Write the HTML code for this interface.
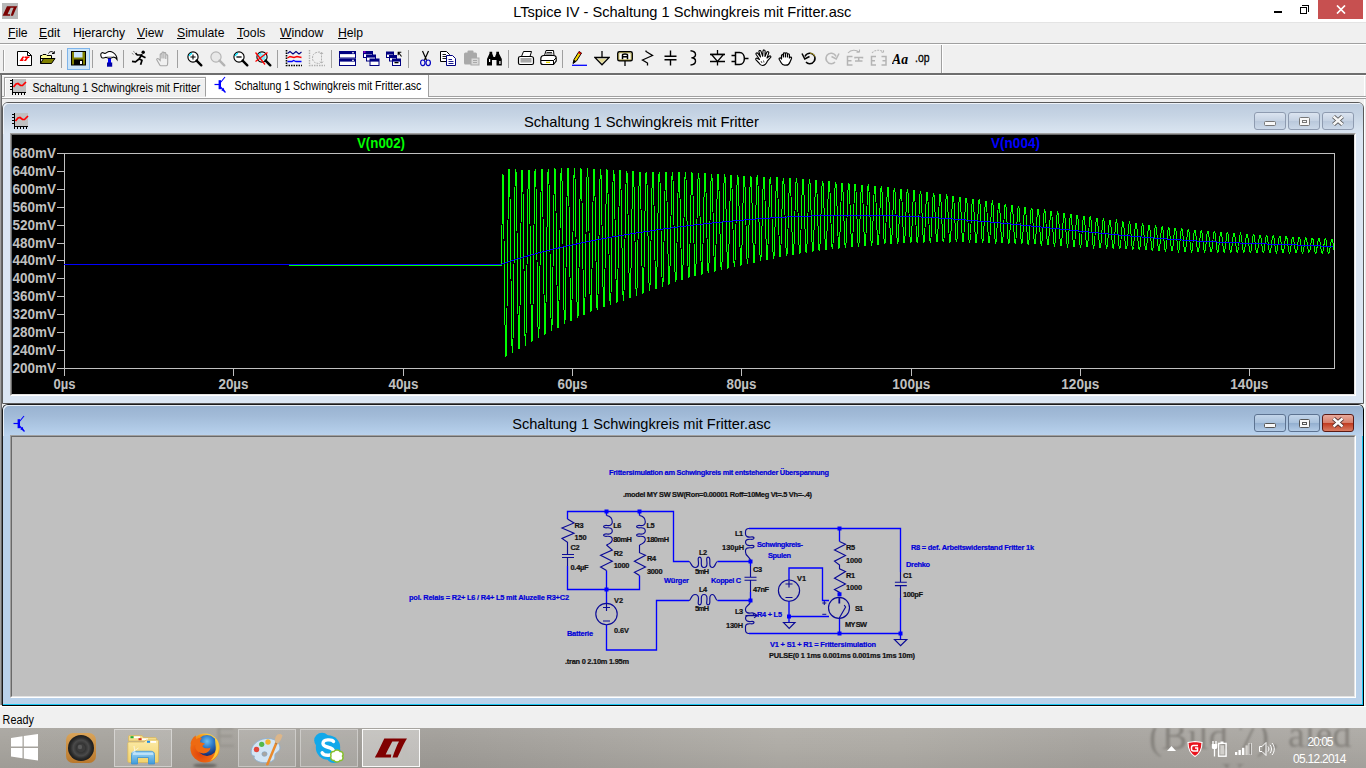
<!DOCTYPE html>
<html>
<head>
<meta charset="utf-8">
<title>LTspice IV - Schaltung 1 Schwingkreis mit Fritter.asc</title>
<style>
*{box-sizing:border-box;margin:0;padding:0}
html,body{width:1366px;height:768px;overflow:hidden;background:#f0f0f0;font-family:"Liberation Sans",sans-serif;}
.abs{position:absolute}
#titlebar{position:absolute;left:0;top:0;width:1366px;height:22px;background:#fff;}
#titletext{position:absolute;left:0;top:3px;width:1366px;text-align:center;font-size:15px;color:#000;letter-spacing:-0.1px}
#menubar{position:absolute;left:0;top:22px;width:1366px;height:22px;background:#f0f0f0;border-top:1px solid #e4e4e4;border-bottom:1px solid #a0a0a0;font-size:12.2px;color:#000}
#menubar span{position:absolute;top:2.6px}
#menubar u{text-decoration:underline}
#toolbar{position:absolute;left:0;top:44px;width:1366px;height:31px;background:#f0f0f0;border-top:1px solid #fff;border-bottom:2px solid #6e6e6e}
#tabbar{position:absolute;left:2px;top:75px;width:1364px;height:27px;}
#mdi{position:absolute;left:0;top:75px;width:1366px;height:630px;background:#f0f0f0;border-left:1px solid #a0a0a0;border-right:1px solid #e8e8e8;box-shadow:inset 1px 0 0 #696969,inset -1px 0 0 #fff}
.tsep{position:absolute;top:5px;width:1px;height:18px;background:#a0a0a0}
.ico{position:absolute;top:5px;width:20px;height:20px}
#status{position:absolute;left:0;top:706px;width:1366px;height:22px;background:#f0f0f0;border-top:1px solid #fff;font-size:12.5px;color:#000}
#taskbar{position:absolute;left:0;top:728px;width:1366px;height:40px;background:#a5a29c;overflow:hidden}
.win{position:absolute;border:1px solid #4a4a4a;border-radius:6px 6px 0 0}
.wtitle{position:absolute;left:0;width:100%;text-align:center;font-size:15px;color:#000}
.cbtn{position:absolute;height:18px;border:1px solid #8e9bb0;border-radius:3px}
.pl{position:absolute;font-family:"Liberation Sans",sans-serif;font-weight:bold;color:#c0c0c0;font-size:13.5px;line-height:14px;white-space:nowrap;transform-origin:0 0;transform:scaleX(0.93)}
.st{position:absolute;font-weight:bold;font-size:7.5px;line-height:8px;white-space:nowrap;color:#1a1a1a;transform-origin:0 50%}
.sb{color:#1c1cd0}
</style>
</head>
<body>
<!-- ============ main title bar ============ -->
<div id="titlebar">
  <svg class="abs" style="left:2px;top:3px" width="16" height="16" viewBox="0 0 16 16"><rect width="16" height="16" fill="#b8b8b8"/><g transform="translate(0.2,2.6) scale(0.46,0.5)"><path d="M10.3,1.4 H33 C30,6 27.5,12 23.5,20.5 L18.5,20.5 C20.5,14 23,8 25,4.4 H18.3 C16,9 13,14 11.7,17.5 L17.2,17.5 L16.9,20.5 L0.8,20.5 C4.5,14 7.5,7 10.3,1.4 Z" fill="#7a0000"/></g></svg>
  <svg class="abs" style="left:500px;top:0" width="400" height="22"><text x="13.2" y="16.7" font-family="Liberation Sans, sans-serif" font-size="15px" fill="#000" textLength="338.2" lengthAdjust="spacingAndGlyphs">LTspice IV - Schaltung 1 Schwingkreis mit Fritter.asc</text></svg>
  <div class="abs" style="left:1274px;top:11px;width:8px;height:2px;background:#000"></div>
  <div class="abs" style="left:1300px;top:7px;width:7px;height:7px;border:1px solid #000;background:#fff"></div>
  <div class="abs" style="left:1302px;top:5px;width:7px;height:7px;border:1px solid #000;border-left:none;border-bottom:none"></div>
  <div class="abs" style="left:1318px;top:0;width:45px;height:19px;background:#c75050"></div>
  <svg class="abs" style="left:1336px;top:5px" width="10" height="9" viewBox="0 0 10 9"><path d="M1 0.5 L9 8.5 M9 0.5 L1 8.5" stroke="#fff" stroke-width="1.7"/></svg>
</div>
<!-- ============ menu bar ============ -->
<div id="menubar">
  <span style="left:8px"><u>F</u>ile</span>
  <span style="left:39px"><u>E</u>dit</span>
  <span style="left:73px">H<u>i</u>erarchy</span>
  <span style="left:137px"><u>V</u>iew</span>
  <span style="left:177px"><u>S</u>imulate</span>
  <span style="left:237px"><u>T</u>ools</span>
  <span style="left:280px"><u>W</u>indow</span>
  <span style="left:338px"><u>H</u>elp</span>
</div>
<!-- ============ toolbar ============ -->
<div id="toolbar">
<div class="abs" style="left:3px;top:5px;width:2px;height:21px;border-left:1px solid #a0a0a0;border-right:1px solid #fff"></div>
<div class="abs" style="left:67px;top:3px;width:23px;height:22px;background:#cce4f7;border:1px solid #7eb4ea"></div>
<div class="tsep" style="left:61px"></div>
<div class="tsep" style="left:92px"></div>
<div class="tsep" style="left:123px"></div>
<div class="tsep" style="left:176.5px"></div>
<div class="tsep" style="left:277px"></div>
<div class="tsep" style="left:331px"></div>
<div class="tsep" style="left:408px"></div>
<div class="tsep" style="left:508px"></div>
<div class="tsep" style="left:561.5px"></div>
<div class="abs" style="left:941px;top:0;width:2px;height:28px;border-left:1px solid #a0a0a0;border-right:1px solid #fff"></div>
<svg class="abs" style="left:17px;top:6px" width="15" height="15" viewBox="0 0 15 15"><path d="M0.5 0.5H10.5L14.5 4.5V14.5H0.5Z" fill="#fff" stroke="#000"/><path d="M10.5 0.5V4.5H14.5" fill="none" stroke="#000"/><path d="M2.5 10 L5.5 5.5 H7.5 L5.5 8.5 H7 L6 10Z M8 5.5 H13 L12 7 H11 L9 10 H6.8 L9 7 H7.2Z" fill="#f00"/></svg>
<svg class="abs" style="left:40px;top:5px" width="16" height="15" viewBox="0 0 16 15"><path d="M8.5 3.5 C9.5 1.2 12.5 0.8 14 3.2 M14.3 3.5 H12 M14.3 3.5 V1.2" stroke="#000" fill="none"/><path d="M0.5 13.5V5.5H2L3 4.5H6L7 5.5H11.5V8.5H0.5" stroke="#000" fill="#ffff9a"/><path d="M0.5 13.5 L3.5 8.5 H15 L11.5 13.5Z" fill="#808000" stroke="#000"/></svg>
<svg class="abs" style="left:71px;top:6px" width="15" height="15" viewBox="0 0 15 15"><rect x="0.5" y="0.5" width="14" height="13.5" fill="#808000" stroke="#000"/><rect x="3" y="1" width="8.5" height="5.5" fill="#c9e6ff"/><rect x="3" y="8.5" width="9" height="5.5" fill="#000"/><rect x="9" y="10" width="2" height="3" fill="#fff"/></svg>
<svg class="abs" style="left:100px;top:5.5px" width="18" height="16" viewBox="0 0 18 16"><rect x="8" y="6.5" width="3" height="5.5" fill="#0000ff"/><rect x="7" y="11.5" width="5.2" height="4.2" fill="#0000a8"/><path d="M1,2.6 C1.4,1.6 2.6,1.4 3.6,2 C4.6,2.6 5.6,2.4 6.6,1.6 C8.2,0.4 11.2,0.3 13.2,1.6 C15.6,3.2 17,5.6 17,8.4 C16,6.6 14.6,6 13,6.2 L11.2,7 H7.8 L6,6.3 C4.6,7 3,7.2 2,6.8 C0.8,6 0.6,3.6 1,2.6 Z" fill="#fff" stroke="#000" stroke-width="1.1"/><path d="M6.5,5.6 H12.8" stroke="#b8b8b8" stroke-width="0.9"/></svg>
<svg class="abs" style="left:131px;top:5px" width="17" height="16" viewBox="0 0 17 16"><circle cx="12.2" cy="2.2" r="1.7" fill="#000"/><path d="M11.2 4.2 L8 9 M10.8 5 L6.3 5 L4.5 3.2 M10.5 5.8 L14.5 7.8 M8 9 L11 10.3 L9.6 14.8 M8 9 L4.5 11.8 L1 11.3" stroke="#000" stroke-width="1.7" fill="none" stroke-linejoin="round"/><path d="M2.2 1.2L4 2.6 M0.8 3.2 L2.6 4.4" stroke="#777" stroke-width="0.8"/></svg>
<svg class="abs" style="left:156px;top:5.5px" width="14" height="16" viewBox="0 0 14 16"><path d="M4.2 9.5 V3.6 C4.2 2.4 6 2.4 6 3.6 V7.5 V1.9 C6 0.7 7.9 0.7 7.9 1.9 V7.5 V2.5 C7.9 1.3 9.8 1.3 9.8 2.5 V8 V4.6 C9.8 3.4 11.7 3.4 11.7 4.6 V11.5 C11.7 13.5 11 14.8 10.2 14.8 H4.6 C4 14.8 3.6 14 3.2 13 L0.9 9 C0.3 7.9 1.8 7 2.6 8Z" fill="none" stroke="#a6a6a6" stroke-width="1.1"/></svg>
<svg class="abs" style="left:187px;top:6px" width="16" height="16" viewBox="0 0 16 16"><circle cx="6" cy="6" r="5.1" fill="#fff" stroke="#000" stroke-width="1.15"/><path d="M2.3 5 A3.8 3.8 0 0 1 5 2.3" stroke="#00e5ff" stroke-width="1.3" fill="none"/><path d="M3.4 6H8.6 M6 3.4V8.6" stroke="#000" stroke-width="1.1"/><path d="M9.6 9.6 L14.3 14.3" stroke="#000" stroke-width="2.4" stroke-linecap="round"/></svg>
<svg class="abs" style="left:210px;top:6px" width="16" height="16" viewBox="0 0 16 16"><circle cx="6" cy="6" r="5.1" fill="#e8e8e8" stroke="#b4b4b4" stroke-width="1.15"/><path d="M9.6 9.6 L14.3 14.3" stroke="#b4b4b4" stroke-width="2.4" stroke-linecap="round"/></svg>
<svg class="abs" style="left:233px;top:6px" width="16" height="16" viewBox="0 0 16 16"><circle cx="6" cy="6" r="5.1" fill="#fff" stroke="#000" stroke-width="1.15"/><path d="M2.3 5 A3.8 3.8 0 0 1 5 2.3" stroke="#00e5ff" stroke-width="1.3" fill="none"/><path d="M3.4 6H8.6" stroke="#000" stroke-width="1.3"/><path d="M9.6 9.6 L14.3 14.3" stroke="#000" stroke-width="2.4" stroke-linecap="round"/></svg>
<svg class="abs" style="left:255px;top:6px" width="17" height="16" viewBox="0 0 17 16"><g transform="translate(1,0)"><circle cx="6" cy="6" r="5.1" fill="#fff" stroke="#000" stroke-width="1.15"/><path d="M2.3 5 A3.8 3.8 0 0 1 5 2.3" stroke="#00e5ff" stroke-width="1.3" fill="none"/><circle cx="6" cy="6" r="3.6" fill="#7fe9f5"/><path d="M9.6 9.6 L14.3 14.3" stroke="#000" stroke-width="2.4" stroke-linecap="round"/></g><path d="M0.5 1.5 L10 13.5 M12.5 1.5 L0.5 10.5" stroke="#f00" stroke-width="1.3"/></svg>
<svg class="abs" style="left:285px;top:5px" width="18" height="17" viewBox="0 0 18 17"><path d="M1.5 0V15.5H17" stroke="#000" stroke-dasharray="1.5 1" fill="none" stroke-width="1.6"/><path d="M2.5 3.5 L5 1.5 L8 4 L11 1.5 L14 4 L16.5 2" stroke="#000080" fill="none" stroke-width="1.1"/><path d="M2.5 8 L5 6.5 L9 7.5 L12 6.5 L16.5 7.5" stroke="#f00" fill="none" stroke-width="1.4"/><path d="M2.5 11.5 H7 L8.5 10.5 L11 11.5 H16.5" stroke="#00f" fill="none" stroke-width="1.3"/></svg>
<svg class="abs" style="left:308px;top:5px" width="18" height="17" viewBox="0 0 18 17"><path d="M1.5 0V15.5H17" stroke="#b0b0b0" stroke-dasharray="1.5 1" fill="none" stroke-width="1.4"/><path d="M12 2 C6 2 4.5 5 4.5 8 C4.5 11 6 13.5 12 13.5 M13.5 2.5V13 M12 4 L13.5 2 L15 4 M12 11.5 L13.5 13.5 L15 11.5" stroke="#b0b0b0" fill="none" stroke-dasharray="2 1"/></svg>
<svg class="abs" style="left:339px;top:6px" width="18" height="15" viewBox="0 0 18 15"><rect x="0.5" y="0.5" width="16" height="6.5" fill="#fff" stroke="#000080"/><rect x="0.5" y="0.5" width="16" height="2.6" fill="#000080"/><rect x="0.5" y="8" width="16" height="6.5" fill="#fff" stroke="#000080"/><rect x="0.5" y="8" width="16" height="2.6" fill="#000080"/><rect x="13" y="1.3" width="2" height="1" fill="#fff"/><rect x="13" y="8.8" width="2" height="1" fill="#fff"/></svg>
<svg class="abs" style="left:363px;top:6px" width="17" height="15" viewBox="0 0 17 15"><rect x="0.5" y="0.5" width="9" height="6" fill="#fff" stroke="#000080"/><rect x="0.5" y="0.5" width="9" height="2.6" fill="#000080"/><rect x="0.5" y="0.5" width="2" height="1" fill="#f0f"/><rect x="3.5" y="4" width="9" height="6" fill="#fff" stroke="#000080"/><rect x="3.5" y="4" width="9" height="2.6" fill="#000080"/><rect x="7" y="8" width="9" height="6.5" fill="#fff" stroke="#000080"/><rect x="7" y="8" width="9" height="2.6" fill="#000080"/></svg>
<svg class="abs" style="left:386px;top:6px" width="17" height="15" viewBox="0 0 17 15"><rect x="0.5" y="1" width="7" height="5.5" fill="#fff" stroke="#000080"/><rect x="0.5" y="1" width="7" height="2.6" fill="#000080"/><rect x="3.5" y="4.5" width="7" height="5.5" fill="#fff" stroke="#000080"/><rect x="3.5" y="4.5" width="7" height="2.6" fill="#000080"/><rect x="6.5" y="8" width="8" height="6.5" fill="#fff" stroke="#000080"/><rect x="6.5" y="8" width="8" height="2.6" fill="#000080"/><rect x="8.5" y="11" width="4" height="1.3" fill="#000"/><path d="M15.5 5.5 L12.5 1.5 M12.2 4.3 V1.2 H15.3" stroke="#000" fill="none" stroke-width="1.1"/></svg>
<svg class="abs" style="left:419px;top:5px" width="13" height="17" viewBox="0 0 13 17"><path d="M3.5 1 L7.5 10 M9.5 1 L5.5 10" stroke="#000" stroke-width="1.2"/><ellipse cx="3.8" cy="12.8" rx="2.2" ry="2.8" fill="none" stroke="#0000c0" stroke-width="1.2"/><ellipse cx="9.2" cy="12.8" rx="2.2" ry="2.8" fill="none" stroke="#0000c0" stroke-width="1.2"/></svg>
<svg class="abs" style="left:440px;top:6px" width="17" height="15" viewBox="0 0 17 15"><path d="M0.5 0.5H6.5L9.5 3.5V10.5H0.5Z" fill="#fff" stroke="#000"/><path d="M2.5 3.5H6 M2.5 5.5H7.5 M2.5 7.5H7.5" stroke="#000" stroke-width="0.9"/><path d="M6.5 4.5H12.5L15.5 7.5V14.5H6.5Z" fill="#fff" stroke="#000080"/><path d="M8.5 8.5H12 M8.5 10.5H13.5 M8.5 12.5H13.5" stroke="#000080" stroke-width="0.9"/></svg>
<svg class="abs" style="left:463px;top:5px" width="17" height="16" viewBox="0 0 17 16"><rect x="1" y="2.5" width="13" height="12" rx="1.5" fill="#a9a9a9"/><rect x="4.5" y="0.5" width="6" height="3.5" rx="1" fill="#a9a9a9"/><rect x="8" y="8" width="8" height="7" fill="#d9d9d9" stroke="#a9a9a9"/><path d="M10 10.5H14 M10 12.5H14" stroke="#a9a9a9"/></svg>
<svg class="abs" style="left:486px;top:6px" width="17" height="15" viewBox="0 0 17 15"><path d="M1 14.5 V8 L3.5 2.5 V0.8 H6.2 V2.5 L7.5 6 H9 L10.3 2.5 V0.8 H13 V2.5 L15.8 8 V14.5 H10.5 V9 H6 V14.5Z" fill="#000"/><rect x="3" y="8" width="1.2" height="3" fill="#fff"/><rect x="13.3" y="10" width="1.2" height="3" fill="#fff"/></svg>
<svg class="abs" style="left:517px;top:6px" width="18" height="15" viewBox="0 0 18 15"><path d="M4.5 5.5 L6.5 0.5 H14.5 L13 5.5" fill="#fff" stroke="#000"/><path d="M1.5 7 C1.5 6 2.5 5.5 3.5 5.5 H14 C15.5 5.5 16.5 6.5 16.5 7.5 V12 C16.5 13 16 13.5 15 13.5 H3 C2 13.5 1.5 13 1.5 12Z" fill="#fff" stroke="#000" stroke-width="1.2"/><rect x="3.5" y="7" width="11" height="4.5" fill="#9a9a9a"/><path d="M3.5 8H14.5 M3.5 10H14.5" stroke="#eee" stroke-width="0.7" stroke-dasharray="1 1"/></svg>
<svg class="abs" style="left:540px;top:5px" width="17" height="16" viewBox="0 0 17 16"><path d="M4.5 5.5 L6 0.5 H13.5 L14 5.5" fill="#fff" stroke="#000"/><path d="M6.5 2.5H12 M6 4H12.5" stroke="#000" stroke-width="0.8"/><path d="M0.8 9 C0.8 7 2 5.5 4 5.5 H13.5 C15 5.5 16.2 6.5 16.2 8 V11 L13.5 14.5 H3 C1.5 14.5 0.8 13.5 0.8 12.5Z" fill="#fff" stroke="#000" stroke-width="1.2"/><path d="M1 10.5H13.5L16 8 M13.5 10.5V14" stroke="#000" fill="none"/><rect x="6" y="11.7" width="4" height="1.3" fill="#e6d800"/></svg>
<svg class="abs" style="left:571px;top:5px" width="17" height="16" viewBox="0 0 17 16"><path d="M1 15.3H16" stroke="#00f" stroke-width="1.3"/><path d="M2 13.5 L3 9.5 L8 1.5 L10.5 3 L5.5 11 Z" fill="#f2d400" stroke="#000" stroke-width="1"/><path d="M8 1.5 L10.5 3 L9.6 4.5 L7.1 3Z" fill="#e00000"/><path d="M2 13.5 L3 9.8 L5.3 11.2Z" fill="#000"/></svg>
<svg class="abs" style="left:594px;top:6px" width="16" height="15" viewBox="0 0 16 15"><path d="M8 0V6.5" stroke="#000" stroke-width="1.3"/><path d="M0.8 6.5H15.2L8 13.8Z" fill="none" stroke="#000" stroke-width="1.3"/><path d="M3.5 7.8H12.5L8 12.2Z" fill="#d8c84a" opacity="0.55"/></svg>
<svg class="abs" style="left:617px;top:6px" width="16" height="15" viewBox="0 0 16 15"><rect x="0.8" y="0.8" width="14.4" height="9" rx="1.5" fill="#fff" stroke="#000" stroke-width="1.5"/><rect x="1.8" y="1.8" width="12.4" height="7" rx="1" fill="none" stroke="#a09020" stroke-width="0.8"/><path d="M5.5 8.3V4C5.5 2.6 10.5 2.6 10.5 4V8.3 M5.5 5.8H10.5" stroke="#000" stroke-width="1.5" fill="none"/><path d="M8 10V15" stroke="#000" stroke-width="1.3"/></svg>
<svg class="abs" style="left:641px;top:5px" width="13" height="16" viewBox="0 0 13 16"><path d="M5 0.5 V1.5 L11.5 5.5 L1.5 10 L6.5 13 V15.5" fill="none" stroke="#000" stroke-width="1.3"/></svg>
<svg class="abs" style="left:664px;top:5px" width="13" height="16" viewBox="0 0 13 16"><path d="M6.5 0.5V6 M0.5 6.2H12.5 M0.5 9.8H12.5 M6.5 9.8V15.5" stroke="#000" stroke-width="1.4" fill="none"/></svg>
<svg class="abs" style="left:689px;top:5px" width="9" height="16" viewBox="0 0 9 16"><path d="M1.5 0.8 C8 1.5 8 7.2 2.5 7.8 C8 8.4 8 14.2 1.5 15" fill="none" stroke="#000" stroke-width="1.4"/></svg>
<svg class="abs" style="left:709px;top:5px" width="17" height="16" viewBox="0 0 17 16"><path d="M8.5 0V15.5 M1 4.5H16 M1 11.5H16" stroke="#000" stroke-width="1.3"/><path d="M2.5 4.5H14.5L8.5 11.5Z" fill="#f0f0f0" stroke="#000" stroke-width="1.3"/></svg>
<svg class="abs" style="left:731px;top:6px" width="18" height="15" viewBox="0 0 18 15"><path d="M0.5 4.5H4.5 M0.5 10.5H4.5 M13.5 7.5H17.5" stroke="#000" stroke-width="1.3"/><path d="M4.5 1.5H8.5C15 1.5 15 13.5 8.5 13.5H4.5Z" fill="#f4f4f4" stroke="#000" stroke-width="1.5"/></svg>
<svg class="abs" style="left:754px;top:4px" width="19" height="18" viewBox="0 0 19 18"><path d="M5.5 10.5 L2.2 5.5 C1.4 4.2 3 3.2 3.9 4.4 L6.5 8 L5 3 C4.5 1.5 6.5 0.9 7 2.4 L8.7 7.2 L9 2 C9.1 0.5 11.1 0.6 11.1 2.1 L11 7.5 L12.8 3.3 C13.4 1.9 15.2 2.7 14.7 4.1 L13 9 L15.2 7.2 C16.4 6.3 17.5 7.7 16.4 8.7 L13.5 11.8 C12.5 14.5 11 16.5 8.5 16.5 C6.5 16.5 5.8 15.5 5 14 L2 10.8 C1.2 9.8 2.5 8.6 3.4 9.5Z" fill="#fff" stroke="#000" stroke-width="1.1" stroke-linejoin="round"/><path d="M7 12 L8 14 M9.5 11.5 L10 13.5" stroke="#000" stroke-width="0.7"/></svg>
<svg class="abs" style="left:778px;top:6px" width="16" height="15" viewBox="0 0 16 15"><path d="M3.5 8 V4.6 C3.5 3.2 5.4 3.2 5.4 4.6 V6 V2.8 C5.4 1.4 7.4 1.4 7.4 2.8 V6 V2.8 C7.4 1.4 9.4 1.4 9.4 2.8 V6 V3.8 C9.4 2.4 11.4 2.4 11.4 3.8 V7 C12 5.5 14 6 13.5 7.5 L12 11 C11.5 12.5 10.5 14.2 8 14.2 H6.5 C4.5 14.2 3.8 13 3 11.5 L1.2 8.3 C0.6 7 2.5 6.3 3.1 7.5Z" fill="#fff" stroke="#000" stroke-width="1.2" stroke-linejoin="round"/></svg>
<svg class="abs" style="left:801px;top:5px" width="16" height="16" viewBox="0 0 16 16"><path d="M4 6.5 C5.5 2.5 11 2 13.2 5.5 C15.5 9.5 12.5 14 8.5 13.8 C7 13.7 5.8 13 5 12" fill="none" stroke="#000" stroke-width="1.5"/><path d="M9 3.2 C11 3 13 4.2 13.8 6.5" stroke="#b09a20" fill="none" stroke-width="1"/><path d="M1 3.5 L3.8 9 L8.5 6.5" fill="none" stroke="#000" stroke-width="1.5"/></svg>
<svg class="abs" style="left:824px;top:5px" width="16" height="16" viewBox="0 0 16 16"><path d="M12 6.5 C10.5 2.5 5 2 2.8 5.5 C0.5 9.5 3.5 14 7.5 13.8 C9 13.7 10.2 13 11 12" fill="none" stroke="#b8b8b8" stroke-width="1.5"/><path d="M15 3.5 L12.2 9 L7.5 6.5" fill="none" stroke="#b8b8b8" stroke-width="1.5"/></svg>
<svg class="abs" style="left:846px;top:4px" width="18" height="17" viewBox="0 0 18 17"><path d="M2 4 C5 0.5 10 0.5 13 3 M13.5 3.2 L10.5 3.2 M13.5 3.2 V0.5" stroke="#b4b4b4" fill="none" stroke-width="1.1"/><path d="M6.5 7.5H1.5V16H6.5 M1.5 11.7H5.5 M9 9.5V8.5H16.5V9.5 M12.7 8.5V12 M9 12H16.5" stroke="#b4b4b4" fill="none" stroke-width="1.5"/></svg>
<svg class="abs" style="left:870px;top:4px" width="18" height="17" viewBox="0 0 18 17"><path d="M2 4 C5 0.5 10 0.5 13 3 M13.5 3.2 L10.5 3.2 M13.5 3.2 V0.5" stroke="#b4b4b4" fill="none" stroke-width="1.1" stroke-dasharray="2 1"/><path d="M6 7.5H1.5V16H6 M1.5 11.7H5 M11.5 7.5H16V16H11.5 M16 11.7H12.5" stroke="#b4b4b4" fill="none" stroke-width="1.5"/></svg>
<svg class="abs" style="left:892px;top:5px" width="17" height="16" viewBox="0 0 17 16"><text x="0" y="14" font-family="Liberation Serif, serif" font-weight="bold" font-style="italic" font-size="15.5px" fill="#000" textLength="16" lengthAdjust="spacingAndGlyphs">Aa</text></svg>
<svg class="abs" style="left:915px;top:5px" width="16" height="17" viewBox="0 0 16 17"><text x="0" y="11.5" font-family="Liberation Sans, sans-serif" font-size="12.5px" fill="#000" stroke="#000" stroke-width="0.3" textLength="14.5" lengthAdjust="spacingAndGlyphs">.op</text></svg>
</div>
<div id="mdi"></div>
<!-- ============ tab bar ============ -->
<div id="tabbar">
<div class="abs" style="left:0px;top:0px;width:1364px;height:22px;border-top:1px solid #fff;border-bottom:1px solid #a0a0a0"></div>
<div class="abs" style="left:0px;top:22px;width:1364px;height:2px;border-top:1px solid #fff;border-bottom:1px solid #a0a0a0"></div>
<div class="abs" style="left:2px;top:2px;width:202px;height:20px;background:#f0f0f0;border:1px solid;border-color:#a0a0a0 #a0a0a0 #f0f0f0 #a0a0a0;box-shadow:inset 1px 1px 0 #fff"></div>
<svg class="abs" style="left:8px;top:4px" width="17" height="17" viewBox="0 0 17 17" shape-rendering="crispEdges"><rect x="3" y="0" width="13" height="13" fill="#c0c0c0"/><path d="M2.5 0V13.5H16" stroke="#000" fill="none"/><path d="M0 1.5H2M0 4.5H2M0 7.5H2M0 10.5H2M2.5 14V16M5.5 14V16M8.5 14V16M11.5 14V16M14.5 14V16" stroke="#000"/><path d="M3.5 8 L6 5 L8 4.5 L10.5 6.5 L12.5 6.5 L16 3" stroke="#f00" stroke-width="1.7" fill="none" shape-rendering="auto"/></svg>
<svg class="abs" style="left:30px;top:4px" width="172" height="18"><text x="0.4" y="12.8" font-family="Liberation Sans, sans-serif" font-size="12.5px" fill="#000" textLength="168" lengthAdjust="spacingAndGlyphs">Schaltung 1 Schwingkreis mit Fritter</text></svg>
<div class="abs" style="left:204px;top:0px;width:223px;height:22px;background:#fff;border-right:1px solid #a0a0a0"></div>
<svg class="abs" style="left:211.5px;top:1px" width="14" height="18" viewBox="0 0 14 18"><path d="M0.5 8.5H5.5" stroke="#0000ff" stroke-width="1.2" fill="none"/><rect x="4.6" y="4.2" width="2.4" height="9" fill="#0000ff"/><path d="M6.5 6.5 L11 1" stroke="#0000ff" stroke-width="1.1" fill="none"/><path d="M6.5 11 L11.5 16.5" stroke="#0000ff" stroke-width="1.3" fill="none"/><path d="M10.8 15.8 L7.2 14.2 L9.6 11.8Z" fill="#0000ff"/></svg>
<svg class="abs" style="left:232px;top:2px" width="192" height="18"><text x="0.4" y="12.8" font-family="Liberation Sans, sans-serif" font-size="12.5px" fill="#000" textLength="187" lengthAdjust="spacingAndGlyphs">Schaltung 1 Schwingkreis mit Fritter.asc</text></svg>

</div>
<!-- ============ MDI area ============ -->
<div class="win" style="left:2px;top:102px;width:1362px;height:302px;background:#dbe6f3;border-color:#5a5a5a">
  <div class="abs" style="left:0;top:0;width:1360px;height:31px;border-radius:5px 5px 0 0;background:linear-gradient(#bccbdd 0%,#c6d4e4 40%,#d3dfec 75%,#dbe6f2 100%);box-shadow:inset 1px 1px 0 #eef3f9"></div>
  <svg class="abs" style="left:9px;top:10px" width="17" height="17" viewBox="0 0 17 17" shape-rendering="crispEdges"><rect x="3" y="0" width="13" height="13" fill="#c0c0c0"/><path d="M2.5 0V13.5H16" stroke="#000" fill="none"/><path d="M0 1.5H2M0 4.5H2M0 7.5H2M0 10.5H2M2.5 14V16M5.5 14V16M8.5 14V16M11.5 14V16M14.5 14V16" stroke="#000"/><path d="M3.5 8 L6 5 L8 4.5 L10.5 6.5 L12.5 6.5 L16 3" stroke="#f00" stroke-width="1.7" fill="none" shape-rendering="auto"/></svg>
  <svg class="abs" style="left:497px;top:0" width="300" height="31"><text x="23.9" y="24.3" font-family="Liberation Sans, sans-serif" font-size="15px" fill="#000" textLength="235" lengthAdjust="spacingAndGlyphs">Schaltung 1 Schwingkreis mit Fritter</text></svg>
  <div class="cbtn" style="left:1251px;top:9px;width:32px;background:linear-gradient(#dbe4f0,#c4d1e2 50%,#b9c8db 51%,#cbd8e8)"><div class="abs" style="left:9px;top:8px;width:12px;height:5px;border:1px solid #777;background:#f8f8f8;border-radius:1.5px"></div></div>
  <div class="cbtn" style="left:1285px;top:9px;width:32px;background:linear-gradient(#dbe4f0,#c4d1e2 50%,#b9c8db 51%,#cbd8e8)"><div class="abs" style="left:10px;top:4px;width:11px;height:9px;border:1px solid #777;border-radius:1.5px;background:#f8f8f8"><div class="abs" style="left:2px;top:2px;width:5px;height:3px;border:1px solid #777;background:transparent"></div></div></div>
  <div class="cbtn" style="left:1319px;top:9px;width:32px;background:linear-gradient(#dbe4f0,#c4d1e2 50%,#b9c8db 51%,#cbd8e8)"><svg class="abs" style="left:9px;top:2px" width="12" height="11" viewBox="0 0 12 11"><path d="M1.5 1.5 L10.5 9.5 M10.5 1.5 L1.5 9.5" stroke="#555" stroke-width="4.2"/><path d="M1.5 1.5 L10.5 9.5 M10.5 1.5 L1.5 9.5" stroke="#f6f6f6" stroke-width="2.4"/></svg></div>
</div>
<div class="abs" style="left:10px;top:133px;width:1346px;height:263px;border:1px solid;border-color:#a0a0a0 #fff #fff #a0a0a0"><div style="width:100%;height:100%;background:#000;border:1px solid;border-color:#696969 #e3e3e3 #e3e3e3 #696969"></div></div>
<svg class="abs" style="left:12px;top:135px" width="1342" height="259" viewBox="12 135 1342 259">
  <g shape-rendering="crispEdges" stroke="#c0c0c0" stroke-width="1" fill="none">
    <path d="M57,153.5H1334.5V368.5H57 M64.5,153V376"/>
    <path d="M57,153.5H64 M57,171.5H64 M57,189.5H64 M57,207.5H64 M57,225.5H64 M57,243.5H64 M57,260.5H64 M57,278.5H64 M57,296.5H64 M57,314.5H64 M57,332.5H64 M57,350.5H64 M57,368.5H64 "/>
    <path d="M64.5,368V376 M233.5,368V376 M403.5,368V376 M572.5,368V376 M741.5,368V376 M911.5,368V376 M1080.5,368V376 M1249.5,368V376 "/>
  </g>
  <g shape-rendering="crispEdges" fill="none" stroke-width="1">
    <path d="M289,265.5 L501,265.5 L501.0,264.3 L501.5,253.0 L502.0,224.7 L502.5,192.7 L503.0,174.1 L503.5,199.5 L504.0,239.3 L504.5,284.4 L505.0,324.5 L505.5,350.6 L506.0,356.6 L506.5,341.4 L507.0,308.3 L507.5,264.8 L508.0,220.9 L508.5,186.4 L509.0,169.1 L509.5,172.9 L510.0,196.7 L510.5,235.0 L511.0,279.2 L511.5,319.1 L512.0,345.7 L512.5,352.9 L513.0,339.1 L513.5,307.6 L514.0,265.3 L514.5,222.1 L515.0,187.5 L515.5,169.4 L516.0,171.8 L516.5,194.0 L517.0,231.0 L517.5,274.2 L518.0,313.8 L518.5,340.9 L519.0,349.2 L519.5,336.9 L520.0,306.8 L520.5,265.9 L521.0,223.2 L521.5,188.6 L522.0,169.7 L522.5,170.9 L523.0,191.6 L523.5,227.2 L524.0,269.4 L524.5,308.7 L525.0,336.2 L525.5,345.5 L526.0,334.6 L526.5,306.1 L527.0,266.3 L527.5,224.4 L528.0,189.8 L528.5,170.2 L529.0,170.1 L529.5,189.4 L530.0,223.6 L530.5,264.8 L531.0,303.8 L531.5,331.6 L532.0,341.9 L532.5,332.4 L533.0,305.3 L533.5,266.8 L534.0,225.6 L534.5,191.0 L535.0,170.8 L535.5,169.5 L536.0,187.3 L536.5,220.1 L537.0,260.4 L537.5,299.0 L538.0,327.0 L538.5,338.3 L539.0,330.2 L539.5,304.5 L540.0,267.2 L540.5,226.7 L541.0,192.2 L541.5,171.4 L542.0,169.0 L542.5,185.4 L543.0,216.9 L543.5,256.1 L544.0,294.3 L544.5,322.6 L545.0,334.7 L545.5,327.9 L546.0,303.7 L546.5,267.6 L547.0,227.9 L547.5,193.5 L548.0,172.1 L548.5,168.6 L549.0,183.7 L549.5,213.8 L550.0,252.0 L550.5,289.7 L551.0,318.3 L551.5,331.2 L552.0,325.6 L552.5,302.8 L553.0,268.0 L553.5,229.0 L554.0,194.7 L554.5,172.9 L555.0,168.3 L555.5,182.1 L556.0,210.8 L556.5,248.1 L557.0,285.3 L557.5,314.0 L558.0,327.8 L558.5,323.4 L559.0,301.9 L559.5,268.3 L560.0,230.1 L560.5,196.0 L561.0,173.7 L561.5,168.2 L562.0,180.6 L562.5,208.1 L563.0,244.3 L563.5,281.0 L564.0,309.9 L564.5,324.3 L565.0,321.1 L565.5,301.0 L566.0,268.6 L566.5,231.2 L567.0,197.3 L567.5,174.6 L568.0,168.1 L568.5,179.3 L569.0,205.5 L569.5,240.7 L570.0,276.8 L570.5,305.8 L571.0,320.9 L571.5,318.8 L572.0,300.0 L572.5,268.8 L573.0,232.2 L573.5,198.6 L574.0,175.5 L574.5,168.2 L575.0,178.1 L575.5,203.0 L576.0,237.2 L576.5,272.8 L577.0,301.8 L577.5,317.6 L578.0,316.6 L578.5,299.0 L579.0,269.0 L579.5,233.3 L580.0,199.9 L580.5,176.5 L581.0,168.3 L581.5,177.0 L582.0,200.7 L582.5,233.8 L583.0,268.9 L583.5,297.9 L584.0,314.2 L584.5,314.3 L585.0,298.0 L585.5,269.1 L586.0,234.2 L586.5,201.2 L587.0,177.5 L587.5,168.5 L588.0,176.1 L588.5,198.5 L589.0,230.6 L589.5,265.0 L590.0,294.0 L590.5,310.9 L591.0,312.0 L591.5,296.9 L592.0,269.2 L592.5,235.2 L593.0,202.5 L593.5,178.6 L594.0,168.7 L594.5,175.2 L595.0,196.4 L595.5,227.5 L596.0,261.3 L596.5,290.3 L597.0,307.7 L597.5,309.7 L598.0,295.8 L598.5,269.3 L599.0,236.1 L599.5,203.8 L600.0,179.6 L600.5,169.1 L601.0,174.5 L601.5,194.5 L602.0,224.5 L602.5,257.8 L603.0,286.6 L603.5,304.5 L604.0,307.4 L604.5,294.7 L605.0,269.3 L605.5,236.9 L606.0,205.0 L606.5,180.7 L607.0,169.5 L607.5,173.8 L608.0,192.7 L608.5,221.7 L609.0,254.3 L609.5,283.0 L610.0,301.3 L610.5,305.1 L611.0,293.5 L611.5,269.2 L612.0,237.8 L612.5,206.2 L613.0,181.8 L613.5,169.9 L614.0,173.3 L614.5,191.0 L615.0,219.0 L615.5,250.9 L616.0,279.4 L616.5,298.1 L617.0,302.8 L617.5,292.3 L618.0,269.1 L618.5,238.5 L619.0,207.4 L619.5,182.9 L620.0,170.4 L620.5,172.8 L621.0,189.4 L621.5,216.4 L622.0,247.6 L622.5,276.0 L623.0,295.0 L623.5,300.5 L624.0,291.1 L624.5,269.0 L625.0,239.2 L625.5,208.6 L626.0,184.0 L626.5,171.0 L627.0,172.4 L627.5,187.9 L628.0,213.9 L628.5,244.5 L629.0,272.6 L629.5,292.0 L630.0,298.2 L630.5,289.8 L631.0,268.8 L631.5,239.9 L632.0,209.8 L632.5,185.2 L633.0,171.6 L633.5,172.1 L634.0,186.5 L634.5,211.6 L635.0,241.4 L635.5,269.3 L636.0,289.0 L636.5,295.9 L637.0,288.5 L637.5,268.5 L638.0,240.6 L638.5,210.9 L639.0,186.3 L639.5,172.2 L640.0,171.9 L640.5,185.3 L641.0,209.3 L641.5,238.5 L642.0,266.1 L642.5,286.0 L643.0,293.6 L643.5,287.2 L644.0,268.3 L644.5,241.2 L645.0,212.0 L645.5,187.4 L646.0,172.9 L646.5,171.7 L647.0,184.1 L647.5,207.2 L648.0,235.6 L648.5,263.0 L649.0,283.0 L649.5,291.3 L650.0,285.8 L650.5,267.9 L651.0,241.7 L651.5,213.1 L652.0,188.5 L652.5,173.6 L653.0,171.7 L653.5,183.0 L654.0,205.1 L654.5,232.8 L655.0,259.9 L655.5,280.1 L656.0,289.0 L656.5,284.4 L657.0,267.6 L657.5,242.2 L658.0,214.1 L658.5,189.7 L659.0,174.4 L659.5,171.6 L660.0,182.1 L660.5,203.2 L661.0,230.2 L661.5,256.9 L662.0,277.3 L662.5,286.7 L663.0,283.1 L663.5,267.2 L664.0,242.7 L664.5,215.1 L665.0,190.8 L665.5,175.2 L666.0,171.7 L666.5,181.2 L667.0,201.3 L667.5,227.6 L668.0,254.0 L668.5,274.5 L669.0,284.5 L669.5,281.6 L670.0,266.7 L670.5,243.1 L671.0,216.1 L671.5,191.9 L672.0,176.0 L672.5,171.8 L673.0,180.3 L673.5,199.6 L674.0,225.2 L674.5,251.2 L675.0,271.7 L675.5,282.2 L676.0,280.2 L676.5,266.2 L677.0,243.5 L677.5,217.1 L678.0,193.0 L678.5,176.8 L679.0,172.0 L679.5,179.6 L680.0,198.0 L680.5,222.8 L681.0,248.4 L681.5,269.0 L682.0,280.0 L682.5,278.8 L683.0,265.7 L683.5,243.8 L684.0,218.0 L684.5,194.1 L685.0,177.6 L685.5,172.2 L686.0,179.0 L686.5,196.4 L687.0,220.5 L687.5,245.7 L688.0,266.4 L688.5,277.8 L689.0,277.3 L689.5,265.2 L690.0,244.1 L690.5,218.9 L691.0,195.2 L691.5,178.5 L692.0,172.5 L692.5,178.4 L693.0,195.0 L693.5,218.3 L694.0,243.1 L694.5,263.8 L695.0,275.6 L695.5,275.9 L696.0,264.6 L696.5,244.3 L697.0,219.7 L697.5,196.3 L698.0,179.4 L698.5,172.8 L699.0,177.9 L699.5,193.6 L700.0,216.2 L700.5,240.6 L701.0,261.2 L701.5,273.4 L702.0,274.4 L702.5,264.0 L703.0,244.6 L703.5,220.5 L704.0,197.4 L704.5,180.3 L705.0,173.2 L705.5,177.5 L706.0,192.3 L706.5,214.2 L707.0,238.2 L707.5,258.7 L708.0,271.3 L708.5,272.9 L709.0,263.4 L709.5,244.7 L710.0,221.3 L710.5,198.4 L711.0,181.2 L711.5,173.6 L712.0,177.2 L712.5,191.1 L713.0,212.3 L713.5,235.8 L714.0,256.3 L714.5,269.2 L715.0,271.4 L715.5,262.7 L716.0,244.9 L716.5,222.1 L717.0,199.5 L717.5,182.2 L718.0,174.0 L718.5,176.9 L719.0,190.0 L719.5,210.5 L720.0,233.5 L720.5,253.9 L721.0,267.1 L721.5,270.0 L722.0,262.0 L722.5,245.0 L723.0,222.8 L723.5,200.5 L724.0,183.1 L724.5,174.5 L725.0,176.7 L725.5,189.0 L726.0,208.7 L726.5,231.3 L727.0,251.6 L727.5,265.0 L728.0,268.5 L728.5,261.3 L729.0,245.1 L729.5,223.5 L730.0,201.5 L730.5,184.1 L731.0,175.1 L731.5,176.5 L732.0,188.1 L732.5,207.1 L733.0,229.2 L733.5,249.3 L734.0,263.0 L734.5,267.0 L735.0,260.6 L735.5,245.2 L736.0,224.2 L736.5,202.5 L737.0,185.0 L737.5,175.7 L738.0,176.5 L738.5,187.3 L739.0,205.5 L739.5,227.1 L740.0,247.1 L740.5,261.0 L741.0,265.6 L741.5,259.9 L742.0,245.2 L742.5,224.9 L743.0,203.5 L743.5,186.0 L744.0,176.3 L744.5,176.5 L745.0,186.5 L745.5,204.1 L746.0,225.2 L746.5,245.0 L747.0,259.0 L747.5,264.1 L748.0,259.1 L748.5,245.2 L749.0,225.5 L749.5,204.5 L750.0,187.0 L750.5,176.9 L751.0,176.5 L751.5,185.8 L752.0,202.7 L752.5,223.3 L753.0,242.9 L753.5,257.1 L754.0,262.7 L754.5,258.4 L755.0,245.2 L755.5,226.1 L756.0,205.5 L756.5,188.0 L757.0,177.6 L757.5,176.6 L758.0,185.2 L758.5,201.4 L759.0,221.5 L759.5,240.9 L760.0,255.2 L760.5,261.3 L761.0,257.6 L761.5,245.1 L762.0,226.7 L762.5,206.5 L763.0,189.0 L763.5,178.3 L764.0,176.8 L764.5,184.7 L765.0,200.2 L765.5,219.7 L766.0,238.9 L766.5,253.4 L767.0,259.8 L767.5,256.8 L768.0,245.1 L768.5,227.3 L769.0,207.4 L769.5,190.1 L770.0,179.1 L770.5,177.0 L771.0,184.2 L771.5,199.0 L772.0,218.1 L772.5,237.1 L773.0,251.6 L773.5,258.5 L774.0,256.1 L774.5,245.0 L775.0,227.8 L775.5,208.4 L776.0,191.1 L776.5,179.9 L777.0,177.3 L777.5,183.8 L778.0,198.0 L778.5,216.5 L779.0,235.2 L779.5,249.9 L780.0,257.1 L780.5,255.3 L781.0,244.9 L781.5,228.3 L782.0,209.3 L782.5,192.1 L783.0,180.7 L783.5,177.6 L784.0,183.5 L784.5,197.0 L785.0,215.0 L785.5,233.5 L786.0,248.2 L786.5,255.7 L787.0,254.5 L787.5,244.8 L788.0,228.8 L788.5,210.2 L789.0,193.2 L789.5,181.6 L790.0,178.0 L790.5,183.3 L791.0,196.1 L791.5,213.6 L792.0,231.8 L792.5,246.5 L793.0,254.4 L793.5,253.8 L794.0,244.7 L794.5,229.3 L795.0,211.1 L795.5,194.2 L796.0,182.4 L796.5,178.4 L797.0,183.1 L797.5,195.3 L798.0,212.3 L798.5,230.2 L799.0,244.9 L799.5,253.1 L800.0,253.0 L800.5,244.6 L801.0,229.8 L801.5,212.0 L802.0,195.3 L802.5,183.3 L803.0,178.9 L803.5,183.0 L804.0,194.6 L804.5,211.0 L805.0,228.6 L805.5,243.3 L806.0,251.9 L806.5,252.2 L807.0,244.4 L807.5,230.3 L808.0,212.9 L808.5,196.3 L809.0,184.3 L809.5,179.4 L810.0,182.9 L810.5,193.9 L811.0,209.9 L811.5,227.1 L812.0,241.8 L812.5,250.6 L813.0,251.5 L813.5,244.3 L814.0,230.7 L814.5,213.8 L815.0,197.4 L815.5,185.2 L816.0,180.0 L816.5,183.0 L817.0,193.3 L817.5,208.8 L818.0,225.7 L818.5,240.4 L819.0,249.4 L819.5,250.8 L820.0,244.2 L820.5,231.1 L821.0,214.6 L821.5,198.4 L822.0,186.2 L822.5,180.7 L823.0,183.1 L823.5,192.8 L824.0,207.8 L824.5,224.4 L825.0,239.0 L825.5,248.2 L826.0,250.0 L826.5,244.0 L827.0,231.6 L827.5,215.5 L828.0,199.5 L828.5,187.2 L829.0,181.3 L829.5,183.2 L830.0,192.4 L830.5,206.8 L831.0,223.1 L831.5,237.6 L832.0,247.1 L832.5,249.3 L833.0,243.9 L833.5,232.0 L834.0,216.4 L834.5,200.6 L835.0,188.2 L835.5,182.0 L836.0,183.4 L836.5,192.1 L837.0,205.9 L837.5,221.9 L838.0,236.4 L838.5,246.0 L839.0,248.6 L839.5,243.7 L840.0,232.4 L840.5,217.2 L841.0,201.7 L841.5,189.3 L842.0,182.8 L842.5,183.7 L843.0,191.8 L843.5,205.2 L844.0,220.8 L844.5,235.1 L845.0,244.9 L845.5,248.0 L846.0,243.6 L846.5,232.8 L847.0,218.1 L847.5,202.8 L848.0,190.3 L848.5,183.6 L849.0,184.0 L849.5,191.6 L850.0,204.4 L850.5,219.7 L851.0,233.9 L851.5,243.9 L852.0,247.3 L852.5,243.4 L853.0,233.2 L853.5,218.9 L854.0,203.9 L854.5,191.4 L855.0,184.4 L855.5,184.4 L856.0,191.4 L856.5,203.8 L857.0,218.7 L857.5,232.8 L858.0,242.9 L858.5,246.7 L859.0,243.3 L859.5,233.6 L860.0,219.8 L860.5,205.0 L861.0,192.5 L861.5,185.3 L862.0,184.9 L862.5,191.4 L863.0,203.2 L863.5,217.8 L864.0,231.8 L864.5,241.9 L865.0,246.0 L865.5,243.2 L866.0,234.0 L866.5,220.6 L867.0,206.0 L867.5,193.7 L868.0,186.2 L868.5,185.4 L869.0,191.4 L869.5,202.7 L870.0,217.0 L870.5,230.8 L871.0,241.0 L871.5,245.5 L872.0,243.0 L872.5,234.4 L873.0,221.4 L873.5,207.2 L874.0,194.8 L874.5,187.2 L875.0,185.9 L875.5,191.4 L876.0,202.3 L876.5,216.2 L877.0,229.8 L877.5,240.2 L878.0,244.9 L878.5,242.9 L879.0,234.8 L879.5,222.2 L880.0,208.3 L880.5,196.0 L881.0,188.1 L881.5,186.5 L882.0,191.5 L882.5,202.0 L883.0,215.5 L883.5,228.9 L884.0,239.3 L884.5,244.3 L885.0,242.8 L885.5,235.1 L886.0,223.1 L886.5,209.4 L887.0,197.1 L887.5,189.1 L888.0,187.2 L888.5,191.7 L889.0,201.7 L889.5,214.8 L890.0,228.1 L890.5,238.5 L891.0,243.8 L891.5,242.7 L892.0,235.5 L892.5,223.9 L893.0,210.5 L893.5,198.3 L894.0,190.2 L894.5,187.9 L895.0,192.0 L895.5,201.5 L896.0,214.2 L896.5,227.3 L897.0,237.8 L897.5,243.3 L898.0,242.6 L898.5,235.9 L899.0,224.7 L899.5,211.6 L900.0,199.5 L900.5,191.3 L901.0,188.7 L901.5,192.3 L902.0,201.3 L902.5,213.7 L903.0,226.6 L903.5,237.1 L904.0,242.9 L904.5,242.5 L905.0,236.3 L905.5,225.5 L906.0,212.7 L906.5,200.7 L907.0,192.4 L907.5,189.4 L908.0,192.7 L908.5,201.2 L909.0,213.2 L909.5,225.9 L910.0,236.5 L910.5,242.4 L911.0,242.5 L911.5,236.7 L912.0,226.3 L912.5,213.8 L913.0,202.0 L913.5,193.5 L914.0,190.3 L914.5,193.1 L915.0,201.2 L915.5,212.8 L916.0,225.3 L916.5,235.8 L917.0,242.0 L917.5,242.4 L918.0,237.1 L918.5,227.1 L919.0,214.9 L919.5,203.2 L920.0,194.6 L920.5,191.2 L921.0,193.5 L921.5,201.3 L922.0,212.5 L922.5,224.8 L923.0,235.3 L923.5,241.6 L924.0,242.4 L924.5,237.5 L925.0,227.9 L925.5,216.0 L926.0,204.5 L926.5,195.8 L927.0,192.1 L927.5,194.1 L928.0,201.4 L928.5,212.2 L929.0,224.3 L929.5,234.7 L930.0,241.2 L930.5,242.4 L931.0,237.8 L931.5,228.7 L932.0,217.2 L932.5,205.7 L933.0,197.0 L933.5,193.0 L934.0,194.6 L934.5,201.5 L935.0,212.0 L935.5,223.8 L936.0,234.3 L936.5,240.9 L937.0,242.3 L937.5,238.2 L938.0,229.5 L938.5,218.3 L939.0,207.0 L939.5,198.2 L940.0,194.0 L940.5,195.3 L941.0,201.7 L941.5,211.9 L942.0,223.5 L942.5,233.8 L943.0,240.6 L943.5,242.3 L944.0,238.6 L944.5,230.3 L945.0,219.4 L945.5,208.2 L946.0,199.5 L946.5,195.0 L947.0,195.9 L947.5,202.0 L948.0,211.8 L948.5,223.1 L949.0,233.4 L949.5,240.3 L950.0,242.4 L950.5,239.0 L951.0,231.1 L951.5,220.5 L952.0,209.5 L952.5,200.7 L953.0,196.1 L953.5,196.7 L954.0,202.3 L954.5,211.7 L955.0,222.8 L955.5,233.0 L956.0,240.1 L956.5,242.4 L957.0,239.4 L957.5,231.9 L958.0,221.6 L958.5,210.8 L959.0,202.0 L959.5,197.1 L960.0,197.4 L960.5,202.7 L961.0,211.8 L961.5,222.6 L962.0,232.7 L962.5,239.9 L963.0,242.4 L963.5,239.8 L964.0,232.7 L964.5,222.7 L965.0,212.1 L965.5,203.3 L966.0,198.3 L966.5,198.2 L967.0,203.1 L967.5,211.8 L968.0,222.4 L968.5,232.4 L969.0,239.7 L969.5,242.5 L970.0,240.2 L970.5,233.5 L971.0,223.8 L971.5,213.3 L972.0,204.5 L972.5,199.4 L973.0,199.0 L973.5,203.6 L974.0,211.9 L974.5,222.3 L975.0,232.2 L975.5,239.5 L976.0,242.5 L976.5,240.6 L977.0,234.3 L977.5,224.9 L978.0,214.6 L978.5,205.8 L979.0,200.5 L979.5,199.9 L980.0,204.1 L980.5,212.1 L981.0,222.2 L981.5,232.0 L982.0,239.3 L982.5,242.6 L983.0,241.0 L983.5,235.0 L984.0,226.0 L984.5,215.9 L985.0,207.2 L985.5,201.7 L986.0,200.8 L986.5,204.6 L987.0,212.3 L987.5,222.1 L988.0,231.8 L988.5,239.2 L989.0,242.7 L989.5,241.4 L990.0,235.8 L990.5,227.0 L991.0,217.2 L991.5,208.5 L992.0,202.9 L992.5,201.7 L993.0,205.2 L993.5,212.5 L994.0,222.1 L994.5,231.7 L995.0,239.1 L995.5,242.8 L996.0,241.8 L996.5,236.5 L997.0,228.1 L997.5,218.4 L998.0,209.8 L998.5,204.1 L999.0,202.7 L999.5,205.8 L1000.0,212.8 L1000.5,222.1 L1001.0,231.6 L1001.5,239.1 L1002.0,242.9 L1002.5,242.3 L1003.0,237.3 L1003.5,229.1 L1004.0,219.7 L1004.5,211.1 L1005.0,205.3 L1005.5,203.7 L1006.0,206.5 L1006.5,213.2 L1007.0,222.2 L1007.5,231.5 L1008.0,239.0 L1008.5,243.0 L1009.0,242.7 L1009.5,238.0 L1010.0,230.2 L1010.5,221.0 L1011.0,212.4 L1011.5,206.6 L1012.0,204.7 L1012.5,207.2 L1013.0,213.5 L1013.5,222.3 L1014.0,231.5 L1014.5,239.0 L1015.0,243.2 L1015.5,243.1 L1016.0,238.8 L1016.5,231.2 L1017.0,222.2 L1017.5,213.7 L1018.0,207.8 L1018.5,205.7 L1019.0,207.9 L1019.5,213.9 L1020.0,222.4 L1020.5,231.5 L1021.0,239.0 L1021.5,243.3 L1022.0,243.5 L1022.5,239.5 L1023.0,232.2 L1023.5,223.4 L1024.0,215.1 L1024.5,209.0 L1025.0,206.7 L1025.5,208.7 L1026.0,214.4 L1026.5,222.6 L1027.0,231.5 L1027.5,239.0 L1028.0,243.4 L1028.5,243.9 L1029.0,240.2 L1029.5,233.2 L1030.0,224.7 L1030.5,216.4 L1031.0,210.3 L1031.5,207.8 L1032.0,209.4 L1032.5,214.8 L1033.0,222.8 L1033.5,231.5 L1034.0,239.0 L1034.5,243.6 L1035.0,244.3 L1035.5,240.9 L1036.0,234.2 L1036.5,225.9 L1037.0,217.7 L1037.5,211.6 L1038.0,208.9 L1038.5,210.2 L1039.0,215.3 L1039.5,223.0 L1040.0,231.6 L1040.5,239.0 L1041.0,243.7 L1041.5,244.6 L1042.0,241.6 L1042.5,235.2 L1043.0,227.1 L1043.5,219.0 L1044.0,212.8 L1044.5,209.9 L1045.0,211.0 L1045.5,215.9 L1046.0,223.3 L1046.5,231.7 L1047.0,239.1 L1047.5,243.9 L1048.0,245.0 L1048.5,242.2 L1049.0,236.2 L1049.5,228.2 L1050.0,220.3 L1050.5,214.1 L1051.0,211.0 L1051.5,211.9 L1052.0,216.4 L1052.5,223.6 L1053.0,231.8 L1053.5,239.2 L1054.0,244.1 L1054.5,245.4 L1055.0,242.9 L1055.5,237.1 L1056.0,229.4 L1056.5,221.5 L1057.0,215.3 L1057.5,212.1 L1058.0,212.7 L1058.5,217.0 L1059.0,223.9 L1059.5,231.9 L1060.0,239.3 L1060.5,244.2 L1061.0,245.8 L1061.5,243.5 L1062.0,238.0 L1062.5,230.5 L1063.0,222.8 L1063.5,216.6 L1064.0,213.2 L1064.5,213.6 L1065.0,217.6 L1065.5,224.2 L1066.0,232.1 L1066.5,239.3 L1067.0,244.4 L1067.5,246.1 L1068.0,244.1 L1068.5,238.9 L1069.0,231.7 L1069.5,224.0 L1070.0,217.8 L1070.5,214.3 L1071.0,214.5 L1071.5,218.2 L1072.0,224.6 L1072.5,232.2 L1073.0,239.5 L1073.5,244.6 L1074.0,246.5 L1074.5,244.7 L1075.0,239.8 L1075.5,232.8 L1076.0,225.3 L1076.5,219.0 L1077.0,215.4 L1077.5,215.4 L1078.0,218.8 L1078.5,224.9 L1079.0,232.4 L1079.5,239.6 L1080.0,244.7 L1080.5,246.8 L1081.0,245.3 L1081.5,240.6 L1082.0,233.8 L1082.5,226.5 L1083.0,220.2 L1083.5,216.5 L1084.0,216.3 L1084.5,219.4 L1085.0,225.3 L1085.5,232.6 L1086.0,239.7 L1086.5,244.9 L1087.0,247.2 L1087.5,245.9 L1088.0,241.5 L1088.5,234.9 L1089.0,227.7 L1089.5,221.4 L1090.0,217.6 L1090.5,217.1 L1091.0,220.0 L1091.5,225.7 L1092.0,232.8 L1092.5,239.8 L1093.0,245.1 L1093.5,247.5 L1094.0,246.4 L1094.5,242.3 L1095.0,235.9 L1095.5,228.8 L1096.0,222.6 L1096.5,218.7 L1097.0,218.0 L1097.5,220.7 L1098.0,226.1 L1098.5,233.0 L1099.0,239.9 L1099.5,245.2 L1100.0,247.8 L1100.5,247.0 L1101.0,243.0 L1101.5,236.9 L1102.0,230.0 L1102.5,223.8 L1103.0,219.8 L1103.5,218.9 L1104.0,221.3 L1104.5,226.5 L1105.0,233.3 L1105.5,240.1 L1106.0,245.4 L1106.5,248.1 L1107.0,247.5 L1107.5,243.8 L1108.0,237.9 L1108.5,231.1 L1109.0,224.9 L1109.5,220.9 L1110.0,219.8 L1110.5,222.0 L1111.0,226.9 L1111.5,233.5 L1112.0,240.2 L1112.5,245.5 L1113.0,248.3 L1113.5,248.0 L1114.0,244.5 L1114.5,238.8 L1115.0,232.1 L1115.5,226.1 L1116.0,221.9 L1116.5,220.7 L1117.0,222.7 L1117.5,227.4 L1118.0,233.7 L1118.5,240.3 L1119.0,245.7 L1119.5,248.6 L1120.0,248.4 L1120.5,245.2 L1121.0,239.7 L1121.5,233.2 L1122.0,227.2 L1122.5,223.0 L1123.0,221.6 L1123.5,223.3 L1124.0,227.8 L1124.5,234.0 L1125.0,240.5 L1125.5,245.8 L1126.0,248.8 L1126.5,248.8 L1127.0,245.9 L1127.5,240.6 L1128.0,234.2 L1128.5,228.2 L1129.0,224.0 L1129.5,222.5 L1130.0,224.0 L1130.5,228.2 L1131.0,234.2 L1131.5,240.6 L1132.0,245.9 L1132.5,249.1 L1133.0,249.3 L1133.5,246.5 L1134.0,241.4 L1134.5,235.2 L1135.0,229.3 L1135.5,225.0 L1136.0,223.3 L1136.5,224.6 L1137.0,228.6 L1137.5,234.4 L1138.0,240.7 L1138.5,246.1 L1139.0,249.3 L1139.5,249.6 L1140.0,247.1 L1140.5,242.2 L1141.0,236.2 L1141.5,230.3 L1142.0,226.0 L1142.5,224.2 L1143.0,225.3 L1143.5,229.1 L1144.0,234.7 L1144.5,240.8 L1145.0,246.2 L1145.5,249.5 L1146.0,250.0 L1146.5,247.7 L1147.0,243.0 L1147.5,237.1 L1148.0,231.3 L1148.5,226.9 L1149.0,225.0 L1149.5,225.9 L1150.0,229.5 L1150.5,234.9 L1151.0,240.9 L1151.5,246.3 L1152.0,249.6 L1152.5,250.3 L1153.0,248.2 L1153.5,243.8 L1154.0,238.0 L1154.5,232.3 L1155.0,227.9 L1155.5,225.8 L1156.0,226.5 L1156.5,229.9 L1157.0,235.1 L1157.5,241.1 L1158.0,246.3 L1158.5,249.8 L1159.0,250.6 L1159.5,248.7 L1160.0,244.5 L1160.5,238.9 L1161.0,233.2 L1161.5,228.8 L1162.0,226.6 L1162.5,227.2 L1163.0,230.3 L1163.5,235.4 L1164.0,241.2 L1164.5,246.4 L1165.0,249.9 L1165.5,250.9 L1166.0,249.2 L1166.5,245.1 L1167.0,239.7 L1167.5,234.1 L1168.0,229.7 L1168.5,227.4 L1169.0,227.8 L1169.5,230.7 L1170.0,235.6 L1170.5,241.2 L1171.0,246.4 L1171.5,250.0 L1172.0,251.1 L1172.5,249.6 L1173.0,245.8 L1173.5,240.5 L1174.0,235.0 L1174.5,230.6 L1175.0,228.2 L1175.5,228.4 L1176.0,231.1 L1176.5,235.8 L1177.0,241.3 L1177.5,246.5 L1178.0,250.1 L1178.5,251.4 L1179.0,250.0 L1179.5,246.4 L1180.0,241.2 L1180.5,235.8 L1181.0,231.4 L1181.5,228.9 L1182.0,228.9 L1182.5,231.5 L1183.0,236.0 L1183.5,241.4 L1184.0,246.5 L1184.5,250.2 L1185.0,251.6 L1185.5,250.4 L1186.0,246.9 L1186.5,242.0 L1187.0,236.7 L1187.5,232.2 L1188.0,229.6 L1188.5,229.5 L1189.0,231.9 L1189.5,236.2 L1190.0,241.5 L1190.5,246.5 L1191.0,250.2 L1191.5,251.7 L1192.0,250.7 L1192.5,247.4 L1193.0,242.6 L1193.5,237.4 L1194.0,233.0 L1194.5,230.3 L1195.0,230.1 L1195.5,232.2 L1196.0,236.4 L1196.5,241.5 L1197.0,246.5 L1197.5,250.3 L1198.0,251.9 L1198.5,251.0 L1199.0,247.9 L1199.5,243.3 L1200.0,238.2 L1200.5,233.7 L1201.0,231.0 L1201.5,230.6 L1202.0,232.6 L1202.5,236.6 L1203.0,241.6 L1203.5,246.5 L1204.0,250.3 L1204.5,252.0 L1205.0,251.3 L1205.5,248.4 L1206.0,243.9 L1206.5,238.9 L1207.0,234.5 L1207.5,231.7 L1208.0,231.1 L1208.5,232.9 L1209.0,236.7 L1209.5,241.6 L1210.0,246.5 L1210.5,250.3 L1211.0,252.1 L1211.5,251.6 L1212.0,248.8 L1212.5,244.5 L1213.0,239.6 L1213.5,235.2 L1214.0,232.3 L1214.5,231.6 L1215.0,233.3 L1215.5,236.9 L1216.0,241.6 L1216.5,246.5 L1217.0,250.2 L1217.5,252.2 L1218.0,251.8 L1218.5,249.2 L1219.0,245.0 L1219.5,240.2 L1220.0,235.8 L1220.5,232.9 L1221.0,232.1 L1221.5,233.6 L1222.0,237.1 L1222.5,241.7 L1223.0,246.4 L1223.5,250.2 L1224.0,252.2 L1224.5,252.0 L1225.0,249.6 L1225.5,245.5 L1226.0,240.8 L1226.5,236.5 L1227.0,233.5 L1227.5,232.6 L1228.0,233.9 L1228.5,237.2 L1229.0,241.7 L1229.5,246.3 L1230.0,250.1 L1230.5,252.2 L1231.0,252.1 L1231.5,249.9 L1232.0,246.0 L1232.5,241.4 L1233.0,237.1 L1233.5,234.1 L1234.0,233.1 L1234.5,234.2 L1235.0,237.4 L1235.5,241.7 L1236.0,246.3 L1236.5,250.1 L1237.0,252.2 L1237.5,252.3 L1238.0,250.2 L1238.5,246.5 L1239.0,242.0 L1239.5,237.7 L1240.0,234.7 L1240.5,233.5 L1241.0,234.5 L1241.5,237.5 L1242.0,241.7 L1242.5,246.2 L1243.0,250.0 L1243.5,252.2 L1244.0,252.4 L1244.5,250.5 L1245.0,246.9 L1245.5,242.5 L1246.0,238.3 L1246.5,235.2 L1247.0,234.0 L1247.5,234.8 L1248.0,237.6 L1248.5,241.7 L1249.0,246.1 L1249.5,249.9 L1250.0,252.2 L1250.5,252.5 L1251.0,250.7 L1251.5,247.3 L1252.0,243.0 L1252.5,238.9 L1253.0,235.8 L1253.5,234.4 L1254.0,235.1 L1254.5,237.8 L1255.0,241.7 L1255.5,246.1 L1256.0,249.8 L1256.5,252.2 L1257.0,252.6 L1257.5,251.0 L1258.0,247.7 L1258.5,243.5 L1259.0,239.4 L1259.5,236.3 L1260.0,234.8 L1260.5,235.4 L1261.0,237.9 L1261.5,241.7 L1262.0,246.0 L1262.5,249.7 L1263.0,252.1 L1263.5,252.7 L1264.0,251.2 L1264.5,248.1 L1265.0,244.0 L1265.5,239.9 L1266.0,236.8 L1266.5,235.3 L1267.0,235.7 L1267.5,238.1 L1268.0,241.7 L1268.5,245.9 L1269.0,249.6 L1269.5,252.1 L1270.0,252.7 L1270.5,251.4 L1271.0,248.4 L1271.5,244.5 L1272.0,240.4 L1272.5,237.3 L1273.0,235.7 L1273.5,236.0 L1274.0,238.2 L1274.5,241.7 L1275.0,245.8 L1275.5,249.5 L1276.0,252.0 L1276.5,252.8 L1277.0,251.6 L1277.5,248.7 L1278.0,244.9 L1278.5,240.9 L1279.0,237.8 L1279.5,236.1 L1280.0,236.3 L1280.5,238.4 L1281.0,241.8 L1281.5,245.8 L1282.0,249.5 L1282.5,252.0 L1283.0,252.8 L1283.5,251.8 L1284.0,249.1 L1284.5,245.3 L1285.0,241.4 L1285.5,238.3 L1286.0,236.5 L1286.5,236.6 L1287.0,238.5 L1287.5,241.8 L1288.0,245.7 L1288.5,249.4 L1289.0,252.0 L1289.5,252.9 L1290.0,251.9 L1290.5,249.4 L1291.0,245.8 L1291.5,241.9 L1292.0,238.8 L1292.5,237.0 L1293.0,237.0 L1293.5,238.7 L1294.0,241.9 L1294.5,245.7 L1295.0,249.3 L1295.5,251.9 L1296.0,252.9 L1296.5,252.1 L1297.0,249.7 L1297.5,246.2 L1298.0,242.5 L1298.5,239.3 L1299.0,237.4 L1299.5,237.3 L1300.0,238.9 L1300.5,242.0 L1301.0,245.7 L1301.5,249.3 L1302.0,251.9 L1302.5,253.0 L1303.0,252.3 L1303.5,250.0 L1304.0,246.7 L1304.5,243.0 L1305.0,239.8 L1305.5,237.9 L1306.0,237.7 L1306.5,239.2 L1307.0,242.1 L1307.5,245.7 L1308.0,249.3 L1308.5,251.9 L1309.0,253.1 L1309.5,252.5 L1310.0,250.4 L1310.5,247.1 L1311.0,243.5 L1311.5,240.3 L1312.0,238.4 L1312.5,238.1 L1313.0,239.4 L1313.5,242.2 L1314.0,245.8 L1314.5,249.3 L1315.0,251.9 L1315.5,253.2 L1316.0,252.8 L1316.5,250.7 L1317.0,247.6 L1317.5,244.0 L1318.0,240.9 L1318.5,238.9 L1319.0,238.5 L1319.5,239.7 L1320.0,242.4 L1320.5,245.9 L1321.0,249.3 L1321.5,252.0 L1322.0,253.3 L1322.5,253.0 L1323.0,251.1 L1323.5,248.1 L1324.0,244.6 L1324.5,241.5 L1325.0,239.5 L1325.5,238.9 L1326.0,240.1 L1326.5,242.6 L1327.0,246.0 L1327.5,249.4 L1328.0,252.1 L1328.5,253.5 L1329.0,253.3 L1329.5,251.5 L1330.0,248.6 L1330.5,245.2 L1331.0,242.1 L1331.5,240.0 L1332.0,239.5 L1332.5,240.5 L1333.0,242.9 L1333.5,246.2 L1334.0,249.6" stroke="#00ff00"/>
    <path d="M64.0,264.5 L289.0,264.5 L501.0,264.5 L505.0,262.9 L511.0,261.0 L517.0,259.1 L523.0,257.3 L529.0,255.6 L535.0,253.9 L541.0,252.3 L547.0,250.8 L553.0,249.3 L559.0,247.9 L565.0,246.5 L571.0,245.2 L577.0,243.9 L583.0,242.6 L589.0,241.4 L595.0,240.2 L601.0,239.1 L607.0,238.0 L613.0,236.9 L619.0,235.9 L625.0,234.9 L631.0,233.9 L637.0,232.9 L643.0,232.0 L649.0,231.1 L655.0,230.2 L661.0,229.3 L667.0,228.5 L673.0,227.7 L679.0,226.9 L685.0,226.2 L691.0,225.4 L697.0,224.7 L703.0,224.0 L709.0,223.4 L715.0,222.7 L721.0,222.1 L727.0,221.5 L733.0,221.0 L739.0,220.4 L745.0,219.9 L751.0,219.4 L757.0,218.9 L763.0,218.5 L769.0,218.1 L775.0,217.7 L781.0,217.3 L787.0,217.0 L793.0,216.7 L799.0,216.4 L805.0,216.2 L811.0,216.0 L817.0,215.8 L823.0,215.6 L829.0,215.5 L835.0,215.4 L841.0,215.3 L847.0,215.3 L853.0,215.2 L859.0,215.3 L865.0,215.3 L871.0,215.4 L877.0,215.5 L883.0,215.6 L889.0,215.7 L895.0,215.9 L901.0,216.1 L907.0,216.4 L913.0,216.6 L919.0,216.9 L925.0,217.2 L931.0,217.6 L937.0,217.9 L943.0,218.3 L949.0,218.7 L955.0,219.2 L961.0,219.6 L967.0,220.1 L973.0,220.6 L979.0,221.1 L985.0,221.6 L991.0,222.1 L997.0,222.7 L1003.0,223.2 L1009.0,223.8 L1015.0,224.4 L1021.0,225.0 L1027.0,225.6 L1033.0,226.2 L1039.0,226.8 L1045.0,227.4 L1051.0,228.1 L1057.0,228.7 L1063.0,229.3 L1069.0,229.9 L1075.0,230.6 L1081.0,231.2 L1087.0,231.8 L1093.0,232.4 L1099.0,233.0 L1105.0,233.6 L1111.0,234.2 L1117.0,234.8 L1123.0,235.3 L1129.0,235.9 L1135.0,236.4 L1141.0,236.9 L1147.0,237.4 L1153.0,237.9 L1159.0,238.4 L1165.0,238.9 L1171.0,239.3 L1177.0,239.7 L1183.0,240.1 L1189.0,240.5 L1195.0,240.9 L1201.0,241.2 L1207.0,241.5 L1213.0,241.8 L1219.0,242.1 L1225.0,242.4 L1231.0,242.7 L1237.0,242.9 L1243.0,243.1 L1249.0,243.4 L1255.0,243.6 L1261.0,243.8 L1267.0,244.0 L1273.0,244.2 L1279.0,244.4 L1285.0,244.6 L1291.0,244.8 L1297.0,245.0 L1303.0,245.2 L1309.0,245.4 L1315.0,245.7 L1321.0,246.0 L1327.0,246.3 L1333.0,246.7" stroke="#0000ff"/>
  </g>
  <g font-family="Liberation Sans, sans-serif" font-weight="bold" font-size="14px" fill="#c0c0c0">
    <text x="12.5" y="158.3" textLength="43.5" lengthAdjust="spacingAndGlyphs">680mV</text>
    <text x="12.5" y="176.3" textLength="43.5" lengthAdjust="spacingAndGlyphs">640mV</text>
    <text x="12.5" y="194.3" textLength="43.5" lengthAdjust="spacingAndGlyphs">600mV</text>
    <text x="12.5" y="212.3" textLength="43.5" lengthAdjust="spacingAndGlyphs">560mV</text>
    <text x="12.5" y="230.3" textLength="43.5" lengthAdjust="spacingAndGlyphs">520mV</text>
    <text x="12.5" y="248.3" textLength="43.5" lengthAdjust="spacingAndGlyphs">480mV</text>
    <text x="12.5" y="265.3" textLength="43.5" lengthAdjust="spacingAndGlyphs">440mV</text>
    <text x="12.5" y="283.3" textLength="43.5" lengthAdjust="spacingAndGlyphs">400mV</text>
    <text x="12.5" y="301.3" textLength="43.5" lengthAdjust="spacingAndGlyphs">360mV</text>
    <text x="12.5" y="319.3" textLength="43.5" lengthAdjust="spacingAndGlyphs">320mV</text>
    <text x="12.5" y="337.3" textLength="43.5" lengthAdjust="spacingAndGlyphs">280mV</text>
    <text x="12.5" y="355.3" textLength="43.5" lengthAdjust="spacingAndGlyphs">240mV</text>
    <text x="12.5" y="373.3" textLength="43.5" lengthAdjust="spacingAndGlyphs">200mV</text>

    <text x="53.5" y="389" textLength="22" lengthAdjust="spacingAndGlyphs">0µs</text>
    <text x="218.5" y="389" textLength="30" lengthAdjust="spacingAndGlyphs">20µs</text>
    <text x="388.5" y="389" textLength="30" lengthAdjust="spacingAndGlyphs">40µs</text>
    <text x="557.5" y="389" textLength="30" lengthAdjust="spacingAndGlyphs">60µs</text>
    <text x="726.5" y="389" textLength="30" lengthAdjust="spacingAndGlyphs">80µs</text>
    <text x="892.3" y="389" textLength="38" lengthAdjust="spacingAndGlyphs">100µs</text>
    <text x="1061.3" y="389" textLength="38" lengthAdjust="spacingAndGlyphs">120µs</text>
    <text x="1230.3" y="389" textLength="38" lengthAdjust="spacingAndGlyphs">140µs</text>

    <text x="357" y="148" fill="#00ff00" textLength="48" lengthAdjust="spacingAndGlyphs">V(n002)</text>
    <text x="991" y="148" fill="#0000ff" textLength="49" lengthAdjust="spacingAndGlyphs">V(n004)</text>
  </g>
</svg>

<div class="win" style="left:2px;top:404px;width:1362px;height:302px;background:#b9d1ea;border-color:#1a1a1a;border-right-color:#000;border-bottom-color:#000;box-shadow:inset -1px -1px 0 #19c6f2">
  <div class="abs" style="left:0;top:0;width:1360px;height:31px;border-radius:5px 5px 0 0;background:linear-gradient(#98b2d0 0%,#a2bbd8 35%,#aec8e4 70%,#bad3ee 100%);box-shadow:inset 1px 1px 0 #e8f0f8"></div>
  <svg class="abs" style="left:10px;top:10px" width="14" height="18" viewBox="0 0 14 18"><path d="M0.5 8.5H5.5" stroke="#0000ff" stroke-width="1.2" fill="none"/><rect x="4.6" y="4.2" width="2.4" height="9" fill="#0000ff"/><path d="M6.5 6.5 L11 1" stroke="#0000ff" stroke-width="1.1" fill="none"/><path d="M6.5 11 L11.5 16.5" stroke="#0000ff" stroke-width="1.3" fill="none"/><path d="M10.8 15.8 L7.2 14.2 L9.6 11.8Z" fill="#0000ff"/></svg>
  <svg class="abs" style="left:497px;top:0" width="300" height="31"><text x="12.2" y="24.3" font-family="Liberation Sans, sans-serif" font-size="15px" fill="#000" textLength="258.6" lengthAdjust="spacingAndGlyphs">Schaltung 1 Schwingkreis mit Fritter.asc</text></svg>
  <div class="cbtn" style="left:1251px;top:9px;width:32px;border-color:#5d7391;background:linear-gradient(#c3d5ea,#a9c1dc 50%,#93afcf 51%,#b3cbe6)"><div class="abs" style="left:9px;top:8px;width:12px;height:5px;border:1px solid #555;background:#f8f8f8;border-radius:1.5px"></div></div>
  <div class="cbtn" style="left:1285px;top:9px;width:32px;border-color:#5d7391;background:linear-gradient(#c3d5ea,#a9c1dc 50%,#93afcf 51%,#b3cbe6)"><div class="abs" style="left:10px;top:4px;width:11px;height:9px;border:1px solid #555;border-radius:1.5px;background:#f8f8f8"><div class="abs" style="left:2px;top:2px;width:5px;height:3px;border:1px solid #555;background:transparent"></div></div></div>
  <div class="cbtn" style="left:1319px;top:9px;width:32px;border-color:#5b1a14;background:linear-gradient(#e9aa9c,#d67f6c 48%,#c03a20 52%,#d97c63)"><svg class="abs" style="left:9px;top:2px" width="12" height="11" viewBox="0 0 12 11"><path d="M1.5 1.5 L10.5 9.5 M10.5 1.5 L1.5 9.5" stroke="#4a2a2a" stroke-width="4.2"/><path d="M1.5 1.5 L10.5 9.5 M10.5 1.5 L1.5 9.5" stroke="#fafafa" stroke-width="2.4"/></svg></div>
</div>
<div class="abs" style="left:10px;top:435px;width:1346px;height:263px;border:1px solid;border-color:#a0a0a0 #fff #fff #a0a0a0"><div style="width:100%;height:100%;background:#c0c0c0;border:1px solid;border-color:#696969 #e3e3e3 #e3e3e3 #696969"></div></div>
<svg class="abs" style="left:12px;top:437px" width="1342" height="259" viewBox="12 437 1342 259">
  <g stroke="#0000ff" stroke-width="1.35" fill="none" stroke-linejoin="miter">
    <!-- wires -->
    <path d="M567.5,519V511.5H673.5V561.5H689"/>
    <path d="M606.5,511.5V515.5 M639.5,511.5V515.5"/>
    <path d="M567.5,566V589.5H639.5V575.5"/>
    <path d="M606.5,570.5V603 M606.5,625V650H656.5V600.5H689"/>
    <path d="M717.5,561.5H750.5 M717.5,600.5H750.5"/>
    <path d="M749,528.5H900.5V572 M900.5,598V633.5 M749,633.5H900.5"/>
    <path d="M750.5,561.5V566 M750.5,592V600.5"/>
    <path d="M839.5,528.5V541.5 M839.5,618.3V633.5"/>
    <path d="M789,580V568H822.5V600.5H829 M789,601.3V616.5H829 M789,616.5V622.5"/>
    <path d="M900.5,633.5V639.5"/>
  </g>
  <g stroke="#0a0a96" stroke-width="1.15" fill="none" stroke-linejoin="miter">
    <!-- R3 -->
    <path d="M567.5,519 L574,523 L562,528 L574,533.2 L562,538.4 L567.5,542.3 V554.4"/>
    <!-- C2 -->
    <path d="M562,554.5H574 M562,557.5H574 M567.5,557.5V566"/>
    <!-- L6 / R2 -->
    <path d="M606.5,515.5 C609.5,516.0 612.3,518.0 612.3,522.0 C612.3,525.0 610.0,525.8 607.0,525.5 C602.5,525.0 602.5,528.3 607.0,527.8 C610.0,527.5 612.3,528.0 612.3,531.0 C612.3,533.3 610.0,534.3 607.0,534.0 C602.5,533.5 602.5,536.8 607.0,536.3 C610.0,536.0 612.3,537.0 612.3,539.5 C612.3,543.0 609.0,544.0 606.5,545.0"/>
    <path d="M606.5,545 L612.3,550 L600.6,555.3 L612.3,561.2 L600.6,567 L606.5,570.5"/>
    <!-- L5 / R4 -->
    <path d="M639.5,515.5 C642.5,516.0 645.3,518.0 645.3,522.0 C645.3,525.0 643.0,525.8 640.0,525.5 C635.5,525.0 635.5,528.3 640.0,527.8 C643.0,527.5 645.3,528.0 645.3,531.0 C645.3,533.3 643.0,534.3 640.0,534.0 C635.5,533.5 635.5,536.8 640.0,536.3 C643.0,536.0 645.3,537.0 645.3,539.5 C645.3,543.0 642.0,544.0 639.5,545.0"/>
    <path d="M639.5,545 V552.7 L645.5,555.3 L634.4,561.2 L645.5,567 L634.4,572.3 L639.5,575.5"/>
    <!-- V2 -->
    <circle cx="606.5" cy="614" r="10.7"/>
    <path d="M603,607.5H610 M606.5,604V611 M603,621H610"/>
    <!-- L2 (loops up, run below) / L4 (humps above, loops down) -->
    <path d="M689.0,561.5 C691.0,561.5 691.0,567.5 695.0,567.5 C697.5,567.5 698.5,565.5 698.5,563.5 C698.5,560.5 697.3,557.1 699.6,557.1 C701.9,557.1 701.3,561.5 701.3,563.5 C701.3,565.5 702.0,567.5 704.0,567.5 C706.0,567.5 707.0,565.5 707.0,563.5 C707.0,560.5 705.8,557.1 708.1,557.1 C710.4,557.1 709.8,561.5 709.8,563.5 C709.8,565.5 710.5,567.5 712.5,567.5 C715.5,567.5 715.5,561.5 717.5,561.5"/>
    <path d="M689.0,600.5 C691.0,600.5 691.0,594.5 695.0,594.5 C697.5,594.5 698.5,596.5 698.5,598.5 C698.5,601.5 697.3,604.9 699.6,604.9 C701.9,604.9 701.3,600.5 701.3,598.5 C701.3,596.5 702.0,594.5 704.0,594.5 C706.0,594.5 707.0,596.5 707.0,598.5 C707.0,601.5 705.8,604.9 708.1,604.9 C710.4,604.9 709.8,600.5 709.8,598.5 C709.8,596.5 710.5,594.5 712.5,594.5 C715.5,594.5 715.5,600.5 717.5,600.5"/>
    <!-- L1 -->
    <path d="M749,528.5 C746.5,528.5 745.5,529.5 745.5,532 V534 C745.5,536.5 748,537.5 751,537 C755,536.3 755,539.8 751,539.3 C748,539 745.5,539.5 745.5,542 C745.5,545 748,546 751,545.5 C755,544.8 755,548.3 751,547.8 C748,547.5 745.5,548 745.5,550.5 V552 C745.5,557 750.5,556 750.5,561.5"/>
    <!-- C3 -->
    <path d="M750.5,566V577 M744.5,577.2H756.5 M744.5,580.2H756.5 M750.5,580.2V592"/>
    <!-- L3 -->
    <path d="M750.5,600.5 C750.5,606 745.5,605 745.5,609 V610 C745.5,612.5 748,613.5 751,613 C755,612.3 755,615.8 751,615.3 C748,615 745.5,615.5 745.5,618 C745.5,621 748,622 751,621.5 C755,620.8 755,624.3 751,623.8 C748,623.5 745.5,624 745.5,626.5 V630 C745.5,632.5 746.5,633.5 749,633.5"/>
    <path d="M745.5,615.6H757 M754,613.3 L757.3,615.6 L754,617.9"/>
    <!-- R5, R1 -->
    <path d="M839.5,541.5 L845.5,544.2 L834.5,550 L845.5,555.6 L834.5,561.2 L839.5,565 V568.8 L845.5,571.6 L834.5,578.2 L845.5,583.9 L834.5,589.5 L839.5,592.4 V594"/>
    <!-- S1 -->
    <circle cx="839" cy="607.8" r="10.5"/>
    <path d="M839.3,618 L845.6,607 L844.2,605.2"/>
    <path d="M839.3,597.5V603.5" stroke-width="1.8"/>
    <path d="M822.3,603H826.3 M824.3,601V605 M822.3,614.3H826.3" stroke-width="1"/>
    <!-- V1 -->
    <circle cx="789" cy="590.6" r="10.6"/>
    <path d="M785.5,584H792.5 M789,580.5V587.5 M785.5,597.5H792.5"/>
    <path d="M783.5,622.5H795L789.2,628.5Z"/>
    <!-- C1 -->
    <path d="M900.5,572V582 M894.9,582.2H906.8 M894.9,585.6H906.8 M900.5,585.6V598"/>
    <path d="M894.5,639.5H906.8L900.6,645.6Z"/>
  </g>
  <g fill="#0000ff" stroke="none">
    <rect x="604.5" y="509.5" width="4" height="4"/><rect x="637.5" y="509.5" width="4" height="4"/>
    <rect x="604.5" y="587.5" width="4" height="4"/>
    <rect x="748.5" y="559.5" width="4" height="4"/><rect x="748.5" y="598.5" width="4" height="4"/>
    <rect x="837.5" y="526.5" width="4" height="4"/><rect x="837.5" y="592.3" width="4" height="4"/><rect x="837.5" y="631.5" width="4" height="4"/>
    <rect x="787" y="614.5" width="4" height="4"/><rect x="898.5" y="631.5" width="4" height="4"/>
  </g>
  <g font-family="Liberation Sans, sans-serif" font-weight="bold" font-size="7.4px" fill="#111" stroke="#111" stroke-width="0.2" lengthAdjust="spacingAndGlyphs">
    <text x="609" y="474.7" textLength="220" fill="#0000d8" stroke="#0000d8">Frittersimulation am Schwingkreis mit entstehender Überspannung</text>
    <text x="623" y="496.7" textLength="189">.model MY SW SW(Ron=0.00001 Roff=10Meg Vt=.5 Vh=-.4)</text>
    <text x="574.5" y="528.2" textLength="9">R3</text>
    <text x="574.5" y="540.2" textLength="12">150</text>
    <text x="570.5" y="550.2" textLength="9">C2</text>
    <text x="570.5" y="570.2" textLength="18">0.4µF</text>
    <text x="613.3" y="528.2" textLength="8">L6</text>
    <text x="613.3" y="542.2" textLength="18.5">80mH</text>
    <text x="613.8" y="556.2" textLength="9">R2</text>
    <text x="613.8" y="568.2" textLength="15.5">1000</text>
    <text x="646.5" y="528.2" textLength="8">L5</text>
    <text x="646.5" y="542.2" textLength="22.5">180mH</text>
    <text x="647" y="561.2" textLength="9">R4</text>
    <text x="647" y="574.2" textLength="15.5">3000</text>
    <text x="699" y="555.2" textLength="8">L2</text>
    <text x="695" y="574.2" textLength="14">5mH</text>
    <text x="664" y="583.2" textLength="25" fill="#0000d8" stroke="#0000d8">Würger</text>
    <text x="711" y="583.2" textLength="30" fill="#0000d8" stroke="#0000d8">Koppel C</text>
    <text x="699" y="592.2" textLength="8">L4</text>
    <text x="695" y="611.2" textLength="14">5mH</text>
    <text x="735" y="536.2" textLength="8">L1</text>
    <text x="722" y="550.2" textLength="22">130µH</text>
    <text x="757" y="547.2" textLength="46" fill="#0000d8" stroke="#0000d8">Schwingkreis-</text>
    <text x="768" y="558.2" textLength="23" fill="#0000d8" stroke="#0000d8">Spulen</text>
    <text x="753" y="572.2" textLength="9">C3</text>
    <text x="753" y="592.2" textLength="16">47nF</text>
    <text x="735" y="614.2" textLength="8">L3</text>
    <text x="726" y="628.2" textLength="17">130H</text>
    <text x="757" y="617.2" textLength="25" fill="#0000d8" stroke="#0000d8">R4 + L5</text>
    <text x="797" y="581.2" textLength="9">V1</text>
    <text x="846" y="550.2" textLength="9">R5</text>
    <text x="846" y="563.2" textLength="16">1000</text>
    <text x="846" y="578.2" textLength="9">R1</text>
    <text x="846" y="590.2" textLength="16">1000</text>
    <text x="855" y="611.2" textLength="8">S1</text>
    <text x="845" y="627.2" textLength="22">MY SW</text>
    <text x="911" y="550.2" textLength="123" fill="#0000d8" stroke="#0000d8">R8 = def. Arbeitswiderstand Fritter 1k</text>
    <text x="906" y="567.2" textLength="24" fill="#0000d8" stroke="#0000d8">Drehko</text>
    <text x="903" y="578.2" textLength="9">C1</text>
    <text x="903" y="597.2" textLength="20">100pF</text>
    <text x="770" y="647.2" textLength="106" fill="#0000d8" stroke="#0000d8">V1 + S1 + R1 = Frittersimulation</text>
    <text x="769" y="658.2" textLength="146">PULSE(0 1 1ms 0.001ms 0.001ms 1ms 10m)</text>
    <text x="409" y="600.2" textLength="160" fill="#0000d8" stroke="#0000d8">pol. Relais = R2+ L6 / R4+ L5 mit Aluzelle R3+C2</text>
    <text x="614" y="603.2" textLength="9">V2</text>
    <text x="614" y="633.2" textLength="15">0.6V</text>
    <text x="567" y="636.2" textLength="26" fill="#0000d8" stroke="#0000d8">Batterie</text>
    <text x="565" y="664.2" textLength="64">.tran 0 2.10m 1.95m</text>
  </g>
</svg>

<!-- ============ status ============ -->
<div id="status"><svg class="abs" style="left:0;top:0" width="60" height="21"><text x="2.6" y="17.2" font-family="Liberation Sans, sans-serif" font-size="12.5px" fill="#000" textLength="31.2" lengthAdjust="spacingAndGlyphs">Ready</text></svg></div>
<!-- ============ taskbar ============ -->
<div id="taskbar">
<div class="abs" style="left:0;top:0;width:1366px;height:40px;background:linear-gradient(rgba(255,255,255,.07),rgba(255,255,255,0) 45%,rgba(0,0,0,.05)),linear-gradient(90deg,#a7a49e 0%,#a5a29c 15%,#a09d98 32%,#a6a39e 42%,#afaca6 57%,#aeaba5 66%,#a6a39e 80%,#a8a5a0 90%,#aba8a3 100%)"></div>
<!-- faint photo texture -->
<svg class="abs" style="left:1100px;top:0;filter:blur(0.9px)" width="266" height="40"><g font-family="Liberation Serif, serif" fill="#86837e"><text x="49" y="21" font-size="38px" textLength="130" lengthAdjust="spacingAndGlyphs">(Bild 7).</text><text x="188" y="19" font-size="38px">aled</text><text x="122" y="55" font-size="30px">V</text></g><path d="M-1 0V40" stroke="#98958f" stroke-width="1" stroke-dasharray="3 2"/></svg>
<div class="abs" style="left:380px;top:2px;width:60px;height:38px;overflow:hidden;font-family:'Liberation Sans',sans-serif;font-size:34px;color:#9c9994;filter:blur(1.2px)">th</div>
<div class="abs" style="left:310px;top:2px;width:60px;height:38px;overflow:hidden;font-family:'Liberation Sans',sans-serif;font-size:34px;color:#9d9a95;filter:blur(1.2px)">et</div>
<div class="abs" style="left:215px;top:-8px;width:30px;height:38px;overflow:hidden;font-family:'Liberation Sans',sans-serif;font-size:30px;color:#98958f;filter:blur(1.2px)">E</div>
<!-- start button -->
<svg class="abs" style="left:11px;top:6px" width="28" height="27" viewBox="0 0 28 27"><path d="M0 4 L11.5 2.3 V12.6 H0Z M12.8 2.1 L27 0 V12.6 H12.8Z M0 13.9 H11.5 V24.3 L0 22.6Z M12.8 13.9 H27 V26.6 L12.8 24.5Z" fill="#fff"/></svg>
<!-- speaker app -->
<svg class="abs" style="left:65px;top:4px" width="32" height="32" viewBox="0 0 32 32"><defs><radialGradient id="spk" cx="50%" cy="50%" r="50%"><stop offset="0" stop-color="#555"/><stop offset="0.25" stop-color="#2a2a2a"/><stop offset="0.6" stop-color="#4a4a4a"/><stop offset="0.8" stop-color="#2c2c2c"/><stop offset="1" stop-color="#1c1c1c"/></radialGradient><linearGradient id="wood" x1="0" y1="0" x2="0" y2="1"><stop offset="0" stop-color="#d9a45a"/><stop offset="1" stop-color="#b9782c"/></linearGradient></defs><rect x="1" y="1" width="30" height="30" rx="7" fill="url(#wood)"/><circle cx="16" cy="16" r="13" fill="url(#spk)"/><circle cx="16" cy="16" r="4.4" fill="#3c3c3c"/><circle cx="15" cy="15" r="2.2" fill="#5a5a5a"/></svg>
<!-- explorer -->
<div class="abs" style="left:114px;top:1px;width:58px;height:38px;background:rgba(255,255,255,.17);border:1px solid rgba(255,255,255,.42)"></div>
<svg class="abs" style="left:127px;top:7px" width="32" height="30" viewBox="0 0 32 30"><defs><linearGradient id="fol" x1="0" y1="0" x2="0" y2="1"><stop offset="0" stop-color="#fbeaa6"/><stop offset="1" stop-color="#f3d36b"/></linearGradient><linearGradient id="std" x1="0" y1="0" x2="0" y2="1"><stop offset="0" stop-color="#9fd6f7"/><stop offset="1" stop-color="#3f9ad9"/></linearGradient></defs><path d="M1.5 1.5 C1.5 0.8 2 0.5 2.7 0.5 H15 L16.5 2.5 H28 C29 2.5 29.5 3 29.5 4 V6 H1.5Z" fill="#f4dc8c" stroke="#d8b65a" stroke-width="0.7"/><rect x="3.5" y="1.2" width="3" height="2" fill="#1fb03a"/><rect x="7" y="1.4" width="6" height="1.8" fill="#fff"/><rect x="11.5" y="3.2" width="3" height="2" fill="#d8281e"/><rect x="15" y="3.4" width="6" height="1.8" fill="#fff"/><path d="M0.8 8.5 C0.8 7.5 1.5 7 2.5 7 H17 L19 5 H30 C31 5 31.5 5.5 31.5 6.5 V26 C31.5 27 31 27.5 30 27.5 H2.5 C1.5 27.5 0.8 27 0.8 26Z" fill="url(#fol)" stroke="#d9b85c" stroke-width="0.8"/><rect x="20" y="5.8" width="3" height="2" fill="#1f8ee8"/><rect x="23.5" y="6" width="5.5" height="1.8" fill="#fff"/><path d="M4.5 29 V19.5 C4.5 17.5 5.8 16.3 7.8 16.3 H24.2 C26.2 16.3 27.5 17.5 27.5 19.5 V29 H21.5 V22.5 H10.5 V29Z" fill="url(#std)" stroke="#3a8fd0" stroke-width="0.8"/><path d="M6 19 H26" stroke="#d8effc" stroke-width="1.3"/><path d="M7 11 L8 18 M5 17.5 L11.5 13" stroke="#fff" stroke-width="0.7" opacity=".9"/></svg>
<!-- firefox -->
<svg class="abs" style="left:188px;top:3px" width="34" height="37" viewBox="0 0 34 37"><defs><radialGradient id="ffb" cx="50%" cy="30%" r="70%"><stop offset="0" stop-color="#6ec1f2"/><stop offset="0.45" stop-color="#2b78c8"/><stop offset="1" stop-color="#14286e"/></radialGradient><radialGradient id="ffo" cx="35%" cy="70%" r="75%"><stop offset="0" stop-color="#e0420c"/><stop offset="0.55" stop-color="#ee6a12"/><stop offset="0.85" stop-color="#f8a01c"/><stop offset="1" stop-color="#ffd84a"/></radialGradient><filter id="ffs" x="-20%" y="-100%" width="140%" height="300%"><feGaussianBlur stdDeviation="1.3"/></filter></defs><ellipse cx="17" cy="34.5" rx="12" ry="2" fill="#6a6864" filter="url(#ffs)"/><circle cx="17" cy="17" r="14.6" fill="url(#ffo)"/><circle cx="19" cy="14.5" r="10.4" fill="url(#ffb)"/><path d="M2.6 13 C3 9 5.5 5.5 8 4.5 C7.5 6 7.8 7.5 8.5 8.5 C10 7 12.5 6.8 14 7.5 C12.5 8.5 12 10 12.3 11.5 C14 11.5 16 12 17 13 C15.5 13.5 14.5 14.5 14.5 15.5 C16 17.5 19.5 18 22.5 16.5 C22 20.5 18 23 14 22.3 C9 21.5 6.5 17.5 7.5 14 C5.5 14.5 3.5 14 2.6 13Z" fill="#ee6a12"/><path d="M27 7 C30 10 31.5 15 30.5 20 C29.5 25 26 28.5 22 30 C26.5 26 28.5 20 27.5 14 C27.3 11 27 9 27 7Z" fill="#ffd23a" opacity=".9"/></svg>
<!-- paint -->
<div class="abs" style="left:238px;top:1px;width:58px;height:38px;background:rgba(255,255,255,.13);border:1px solid rgba(255,255,255,.36)"></div>
<svg class="abs" style="left:249px;top:3px" width="36" height="36" viewBox="0 0 36 36"><path d="M2.2 22 C1.5 15 8 8.5 17 7.5 C25 6.8 31 11 31 17 C31 20 28 21 26.5 22.5 C25 24.5 27 27 24 29.5 C20 32.5 12 32.5 7.5 29.5 C5 28 4.5 26 5.5 25 C4 25 2.5 24 2.2 22Z" fill="#d3e5f4" stroke="#8fb0cf" stroke-width="0.9"/><ellipse cx="15.5" cy="23" rx="2.6" ry="2.3" fill="#a9a6a0" stroke="#8aa8c4" stroke-width="0.7"/><circle cx="7.5" cy="18.5" r="2.7" fill="#e2463a"/><circle cx="12.7" cy="13.3" r="2.6" fill="#55b848"/><circle cx="19" cy="11" r="2.7" fill="#f2b22e"/><path d="M17 33.5 L26 12 L28.3 13 L19.5 34 C18.5 35 17 34.5 17 33.5Z" fill="#e98a2c"/><path d="M26 12 C25.5 8 26.5 5 28.5 3.5 C30 2.5 33 3 33.5 4.5 C32.5 8 31 11 28.3 13Z" fill="#dcb68a"/><path d="M26 12 L28.3 13" stroke="#b57a3a" stroke-width="1.2"/></svg>
<!-- skype -->
<div class="abs" style="left:300px;top:1px;width:58px;height:38px;background:rgba(255,255,255,.13);border:1px solid rgba(255,255,255,.36)"></div>
<svg class="abs" style="left:312px;top:3px" width="36" height="36" viewBox="0 0 36 36"><circle cx="10" cy="9.5" r="7.8" fill="#12a8ea"/><circle cx="22" cy="24" r="8" fill="#12a8ea"/><circle cx="16" cy="16.5" r="12.2" fill="#12a8ea"/><path d="M21.5 10.5 C20 8.3 11 7.8 11 12.5 C11 17.5 21.5 15 21.5 20.5 C21.5 25.5 12 25 10.2 21.8" fill="none" stroke="#fff" stroke-width="3.4" stroke-linecap="round"/><path d="M19 25 C18 22 20 20 22 20.5 C23 18.5 27 18.5 28 20.5 C30.5 20 32 23 30.5 25 C32 27.5 30 30 28 29.5 C27 31.5 23 31.5 22 29.5 C19.5 30 18 27 19 25Z" fill="#fff" stroke="#86bf2c" stroke-width="1.5"/></svg>
<!-- LTspice active -->
<div class="abs" style="left:362px;top:1px;width:58px;height:38px;background:rgba(255,255,255,.36);border:1px solid rgba(255,255,255,.9)"></div>
<svg class="abs" style="left:374px;top:9px" width="34" height="22" viewBox="0 0 34 22"><path d="M10.3,1.4 H33 C30,6 27.5,12 23.5,20.5 L18.5,20.5 C20.5,14 23,8 25,4.4 H18.3 C16,9 13,14 11.7,17.5 L17.2,17.5 L16.9,20.5 L0.8,20.5 C4.5,14 7.5,7 10.3,1.4 Z" fill="#800000"/></svg>
<!-- tray -->
<svg class="abs" style="left:1167px;top:18px" width="9" height="5" viewBox="0 0 9 5"><path d="M0 5 L4.5 0 L9 5Z" fill="#fff"/></svg>
<svg class="abs" style="left:1187px;top:13px" width="16" height="16" viewBox="0 0 16 16"><path d="M1 1.5 L8 0.5 L15 1.5 C15 8 13 12.5 8 15.5 C3 12.5 1 8 1 1.5Z" fill="#e8121c" stroke="#fff" stroke-width="1.1"/><path d="M11 4.5 H6.5 C5 4.5 4.5 5.5 4.5 6.5 V8 C4.5 9.5 5.5 10 6.5 10 H10.5 V7 H8" stroke="#fff" stroke-width="1.5" fill="none"/></svg>
<svg class="abs" style="left:1211px;top:13px" width="17" height="16" viewBox="0 0 17 16"><path d="M2 0V3 M5 0V3" stroke="#fff" stroke-width="1.3"/><path d="M0.8 3H6.2V6.5C6.2 7.5 5.2 8 4.2 8H2.8C1.8 8 0.8 7.5 0.8 6.5Z" fill="#fff"/><path d="M3.5 8V15.5" stroke="#fff" stroke-width="1.3"/><rect x="9.5" y="0.5" width="3" height="2" fill="#fff"/><rect x="7.6" y="2.4" width="7.5" height="12.8" fill="none" stroke="#fff" stroke-width="1.4"/><rect x="9.3" y="4.2" width="4" height="9.3" fill="#d2d0cc"/></svg>
<svg class="abs" style="left:1235px;top:15px" width="17" height="12" viewBox="0 0 17 12"><rect x="0" y="9" width="2.3" height="3" fill="#fff"/><rect x="3.5" y="7" width="2.3" height="5" fill="#fff"/><rect x="7" y="4.8" width="2.3" height="7.2" fill="#fff"/><rect x="10.5" y="2.4" width="2.3" height="9.6" fill="#d5d3cf"/><rect x="14" y="0" width="2.3" height="12" fill="#8a8782" stroke="#fff" stroke-width="0.6"/></svg>
<svg class="abs" style="left:1259px;top:14px" width="16" height="14" viewBox="0 0 16 14"><path d="M0.5 4.5H3L7 0.5V13.5L3 9.5H0.5Z" fill="none" stroke="#fff" stroke-width="1"/><path d="M9 4.5 C10.2 6 10.2 8 9 9.5 M11 2.8 C13 5.2 13 8.8 11 11.2 M13 1 C16 4.5 16 9.5 13 13" fill="none" stroke="#fff" stroke-width="1"/></svg>
<svg class="abs" style="left:1290px;top:6px" width="70" height="32"><g font-family="Liberation Sans, sans-serif" font-size="12px" fill="#fff" lengthAdjust="spacingAndGlyphs"><text x="17.5" y="11.8" textLength="26">20:05</text><text x="3" y="28.8" textLength="53.5">05.12.2014</text></g></svg>


</div>
</body>
</html>
